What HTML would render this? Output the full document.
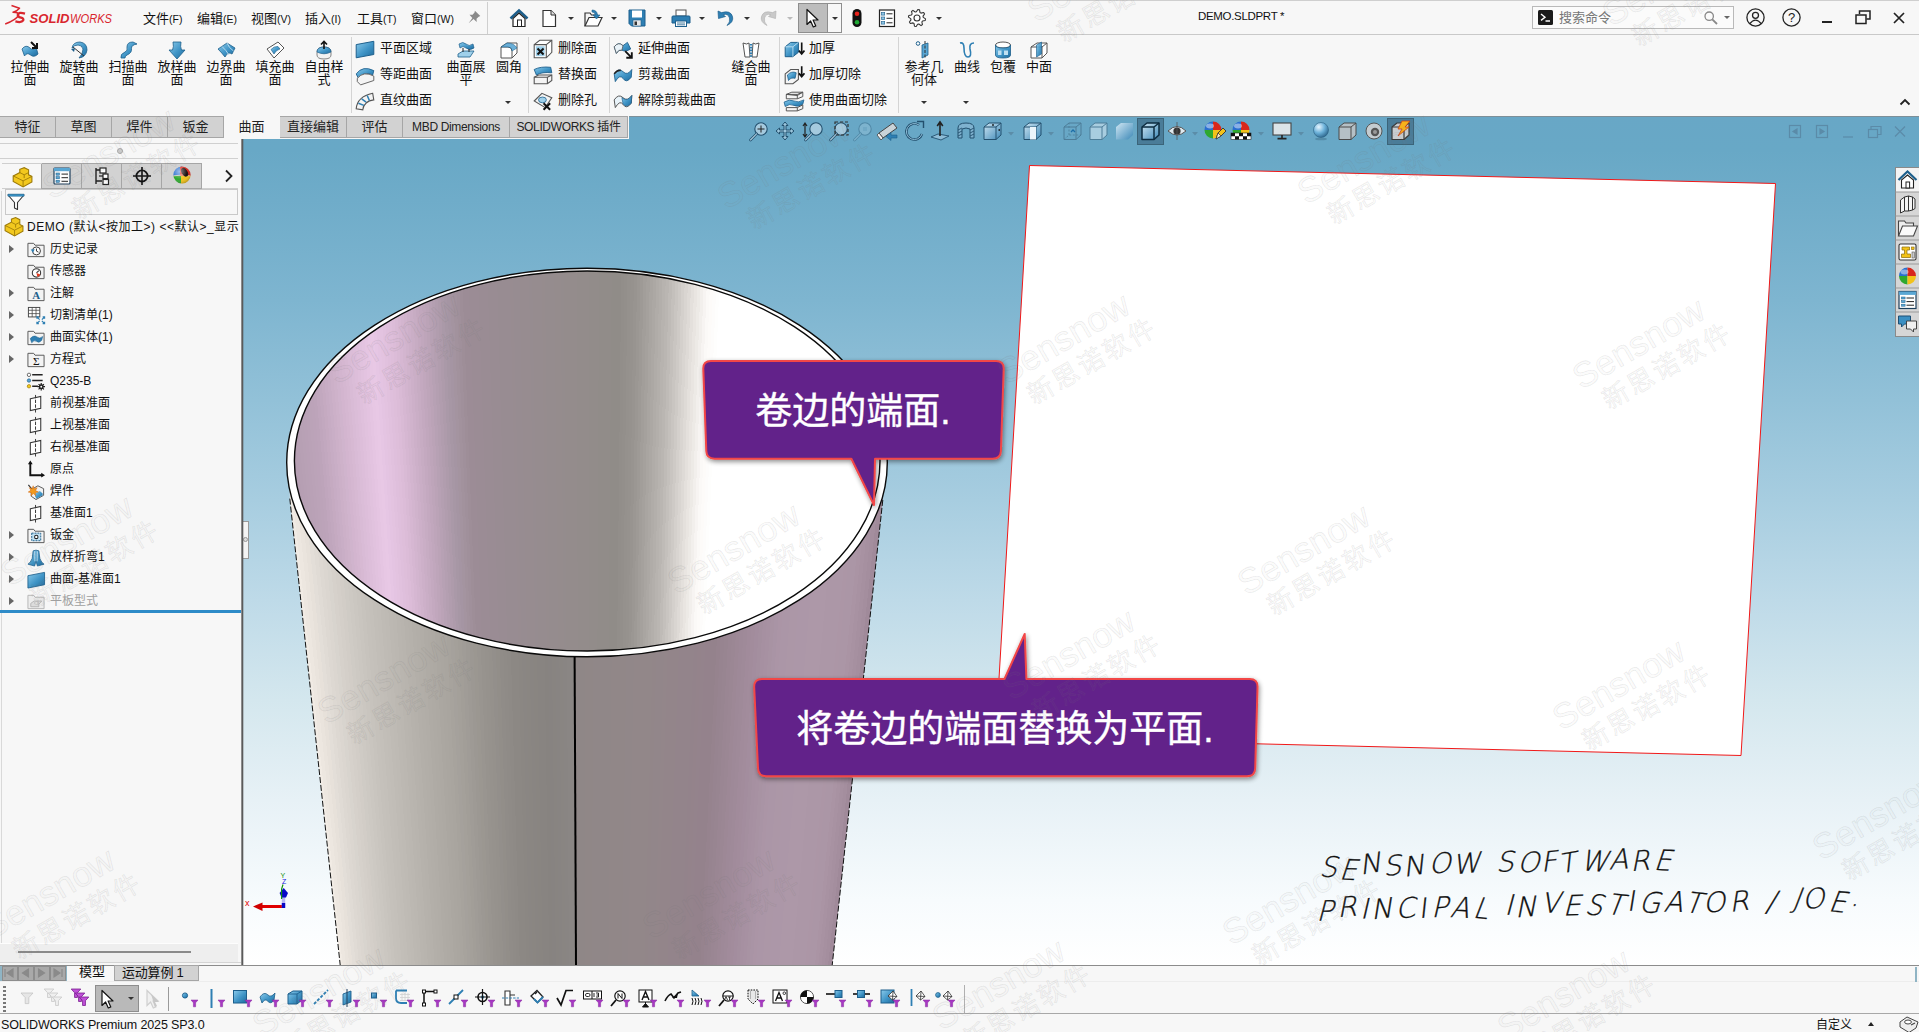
<!DOCTYPE html>
<html lang="zh-CN">
<head>
<meta charset="utf-8">
<title>DEMO.SLDPRT - SOLIDWORKS</title>
<style>
*{box-sizing:border-box}
html,body{margin:0;padding:0}
body{width:1919px;height:1032px;position:relative;overflow:hidden;background:#f7f7f7;
 font-family:"Liberation Sans","Noto Sans CJK SC",sans-serif;font-size:12px;color:#111}
.abs{position:absolute}
#titlebar{position:absolute;left:0;top:0;width:1919px;height:35px;background:#f7f7f7;border-bottom:1px solid #c9c9c9}
#ribbon{position:absolute;left:0;top:35px;width:1919px;height:81px;background:#f7f7f7}
#tabs{position:absolute;left:0;top:116px;height:23px;width:629px;background:#f7f7f7}
#viewport{position:absolute;left:0;top:0}
#leftpanel{position:absolute;left:0;top:139px;width:242px;height:826px;background:#f7f7f7;border-right:1px solid #8c8c8c}
#bottombar{position:absolute;left:0;top:965px;width:1919px;height:67px;background:#f7f7f7;border-top:1px solid #8c8c8c}
.menu{position:absolute;top:8px;font-size:13px;white-space:nowrap;color:#111}
.menu small{font-size:10.5px}
.tab{position:absolute;top:0;height:22px;background:#d2d2d2;border:1px solid #a6a6a6;border-left:none;font-size:13px;text-align:center;line-height:20px;color:#222;white-space:nowrap}
.tab.act{background:#f7f7f7;border-color:transparent}
.big{position:absolute;top:3px;width:50px;text-align:center;font-size:13px;line-height:13px;color:#111}
.big svg{display:block;margin:0 auto 3px auto}
.sm{position:absolute;font-size:13px;line-height:16px;white-space:nowrap;color:#111}
.sm svg{position:absolute;left:-27px;top:-2px}
.vsep{position:absolute;top:2px;width:1px;height:76px;background:#d4d4d4}
.dd{position:absolute;width:0;height:0;border-left:3px solid transparent;border-right:3px solid transparent;border-top:3px solid #333}
.row{position:absolute;left:0;height:22px;width:241px;font-size:12px;line-height:22px;white-space:nowrap;color:#111}
.row .tx{position:absolute;left:50px;top:0}
.row .ar{position:absolute;left:9px;top:7px;width:0;height:0;border-top:4px solid transparent;border-bottom:4px solid transparent;border-left:5px solid #666}
.row svg{position:absolute;left:26px;top:2px}
</style>
</head>
<body>
<svg id="gdefs" width="0" height="0" style="position:absolute"><defs><linearGradient id="rb" x1="0" y1="0" x2="1" y2="1"><stop offset="0" stop-color="#8ccbeb"/><stop offset=".55" stop-color="#3f94c6"/><stop offset="1" stop-color="#1f6a9c"/></linearGradient></defs></svg>
<svg id="viewport" width="1919" height="1032" viewBox="0 0 1919 1032">
<defs>
<linearGradient id="bg" x1="0" y1="116" x2="0" y2="965" gradientUnits="userSpaceOnUse">
<stop offset="0.0000" stop-color="#68a7c6"/><stop offset="0.0400" stop-color="#68a8c6"/><stop offset="0.0989" stop-color="#6facc9"/><stop offset="0.2167" stop-color="#7eb5d0"/><stop offset="0.3345" stop-color="#92c1d8"/><stop offset="0.4523" stop-color="#a7cde0"/><stop offset="0.5701" stop-color="#bedae8"/><stop offset="0.6879" stop-color="#d4e7ee"/><stop offset="0.8057" stop-color="#e7f1f6"/><stop offset="0.9234" stop-color="#f7fbfd"/><stop offset="1.0000" stop-color="#ffffff"/>
</linearGradient>
<linearGradient id="gin" x1="294" y1="0" x2="880" y2="0" gradientUnits="userSpaceOnUse">
<stop offset="0" stop-color="#b09cac"/>
<stop offset="0.061" stop-color="#c4a8c0"/>
<stop offset="0.147" stop-color="#e8c8e6"/>
<stop offset="0.215" stop-color="#d4b4d0"/>
<stop offset="0.275" stop-color="#b49cb0"/>
<stop offset="0.326" stop-color="#9c8c96"/>
<stop offset="0.462" stop-color="#968c8e"/>
<stop offset="0.565" stop-color="#908c88"/>
<stop offset="0.633" stop-color="#b8b4b0"/>
<stop offset="0.693" stop-color="#f4f0ec"/>
<stop offset="0.72" stop-color="#ffffff"/>
<stop offset="1" stop-color="#ffffff"/>
</linearGradient>
<linearGradient id="gout" x1="290" y1="0" x2="885" y2="0" gradientUnits="userSpaceOnUse">
<stop offset="0.017" stop-color="#f4f0ec"/>
<stop offset="0.05" stop-color="#e0dcd8"/>
<stop offset="0.10" stop-color="#ccc8c4"/>
<stop offset="0.218" stop-color="#b8b4b0"/>
<stop offset="0.336" stop-color="#a09c98"/>
<stop offset="0.454" stop-color="#888480"/>
<stop offset="0.479" stop-color="#888482"/>
<stop offset="0.479" stop-color="#8c8486"/>
<stop offset="0.588" stop-color="#908688"/>
<stop offset="0.689" stop-color="#948490"/>
<stop offset="0.79" stop-color="#a896a6"/>
<stop offset="0.874" stop-color="#b09cac"/>
<stop offset="0.941" stop-color="#a894a4"/>
<stop offset="1" stop-color="#a08c9c"/>
</linearGradient>
<clipPath id="bodyclip"><path d="M289.8 498.6 L340.3 966 L832.1 966 L882.8 500 L882.8 440 L289.8 440 Z"/></clipPath><clipPath id="inclip"><ellipse cx="587.2" cy="461" rx="292.8" ry="190"/></clipPath><clipPath id="vpclip"><rect x="242" y="116" width="1677" height="849"/></clipPath>
<filter id="sh" x="-10%" y="-20%" width="120%" height="150%"><feGaussianBlur in="SourceAlpha" stdDeviation="2.5"/><feOffset dx="1" dy="2"/><feComponentTransfer><feFuncA type="linear" slope="0.45"/></feComponentTransfer><feMerge><feMergeNode/><feMergeNode in="SourceGraphic"/></feMerge></filter>
</defs>
<rect x="242" y="116" width="1677" height="849" fill="url(#bg)"/>
<g clip-path="url(#vpclip)">
<!-- cylinder body -->
<g clip-path="url(#bodyclip)" shape-rendering="crispEdges"><path d="M282.7 440 L288.3 440 L344.4 966 L339.5 966 Z" fill="#f1ebe4"/><path d="M286.7 440 L292.3 440 L347.7 966 L342.8 966 Z" fill="#ede7e0"/><path d="M290.7 440 L296.4 440 L350.9 966 L346.1 966 Z" fill="#eae4dd"/><path d="M294.8 440 L300.4 440 L354.2 966 L349.3 966 Z" fill="#e7e1da"/><path d="M298.8 440 L304.5 440 L357.5 966 L352.6 966 Z" fill="#e3ded8"/><path d="M302.9 440 L308.5 440 L360.8 966 L355.9 966 Z" fill="#e0dbd5"/><path d="M306.9 440 L312.5 440 L364.1 966 L359.2 966 Z" fill="#ddd8d2"/><path d="M310.9 440 L316.6 440 L367.3 966 L362.5 966 Z" fill="#dbd6d0"/><path d="M315.0 440 L320.6 440 L370.6 966 L365.7 966 Z" fill="#d8d4ce"/><path d="M319.0 440 L324.7 440 L373.9 966 L369.0 966 Z" fill="#d6d1cb"/><path d="M323.1 440 L328.7 440 L377.2 966 L372.3 966 Z" fill="#d4cfc9"/><path d="M327.1 440 L332.7 440 L380.4 966 L375.6 966 Z" fill="#d2cdc7"/><path d="M331.1 440 L336.8 440 L383.7 966 L378.8 966 Z" fill="#cfcbc5"/><path d="M335.2 440 L340.8 440 L387.0 966 L382.1 966 Z" fill="#cdc9c3"/><path d="M339.2 440 L344.9 440 L390.3 966 L385.4 966 Z" fill="#cbc7c1"/><path d="M343.3 440 L348.9 440 L393.6 966 L388.7 966 Z" fill="#c9c5bf"/><path d="M347.3 440 L352.9 440 L396.8 966 L392.0 966 Z" fill="#c7c3bd"/><path d="M351.3 440 L357.0 440 L400.1 966 L395.2 966 Z" fill="#c5c1bb"/><path d="M355.4 440 L361.0 440 L403.4 966 L398.5 966 Z" fill="#c4c0ba"/><path d="M359.4 440 L365.0 440 L406.7 966 L401.8 966 Z" fill="#c2beb8"/><path d="M363.4 440 L369.1 440 L410.0 966 L405.1 966 Z" fill="#c1bdb7"/><path d="M367.5 440 L373.1 440 L413.2 966 L408.4 966 Z" fill="#bfbbb5"/><path d="M371.5 440 L377.2 440 L416.5 966 L411.6 966 Z" fill="#bebab4"/><path d="M375.6 440 L381.2 440 L419.8 966 L414.9 966 Z" fill="#bcb8b2"/><path d="M379.6 440 L385.2 440 L423.1 966 L418.2 966 Z" fill="#bbb7b1"/><path d="M383.6 440 L389.3 440 L426.3 966 L421.5 966 Z" fill="#b9b5af"/><path d="M387.7 440 L393.3 440 L429.6 966 L424.7 966 Z" fill="#b8b4ae"/><path d="M391.7 440 L397.4 440 L432.9 966 L428.0 966 Z" fill="#b6b2ac"/><path d="M395.8 440 L401.4 440 L436.2 966 L431.3 966 Z" fill="#b5b1ab"/><path d="M399.8 440 L405.4 440 L439.5 966 L434.6 966 Z" fill="#b3afa9"/><path d="M403.8 440 L409.5 440 L442.7 966 L437.9 966 Z" fill="#b2aea8"/><path d="M407.9 440 L413.5 440 L446.0 966 L441.1 966 Z" fill="#b1ada7"/><path d="M411.9 440 L417.6 440 L449.3 966 L444.4 966 Z" fill="#afaba5"/><path d="M416.0 440 L421.6 440 L452.6 966 L447.7 966 Z" fill="#aeaaa4"/><path d="M420.0 440 L425.6 440 L455.9 966 L451.0 966 Z" fill="#ada9a3"/><path d="M424.0 440 L429.7 440 L459.1 966 L454.3 966 Z" fill="#aba7a1"/><path d="M428.1 440 L433.7 440 L462.4 966 L457.5 966 Z" fill="#aaa6a0"/><path d="M432.1 440 L437.8 440 L465.7 966 L460.8 966 Z" fill="#a9a59f"/><path d="M436.2 440 L441.8 440 L469.0 966 L464.1 966 Z" fill="#a7a39d"/><path d="M440.2 440 L445.8 440 L472.2 966 L467.4 966 Z" fill="#a5a19c"/><path d="M444.2 440 L449.9 440 L475.5 966 L470.6 966 Z" fill="#a4a09a"/><path d="M448.3 440 L453.9 440 L478.8 966 L473.9 966 Z" fill="#a29e98"/><path d="M452.3 440 L457.9 440 L482.1 966 L477.2 966 Z" fill="#a09c97"/><path d="M456.3 440 L462.0 440 L485.4 966 L480.5 966 Z" fill="#9e9a95"/><path d="M460.4 440 L466.0 440 L488.6 966 L483.8 966 Z" fill="#9c9893"/><path d="M464.4 440 L470.1 440 L491.9 966 L487.0 966 Z" fill="#9b9791"/><path d="M468.5 440 L474.1 440 L495.2 966 L490.3 966 Z" fill="#999590"/><path d="M472.5 440 L478.1 440 L498.5 966 L493.6 966 Z" fill="#97938e"/><path d="M476.5 440 L482.2 440 L501.8 966 L496.9 966 Z" fill="#96928d"/><path d="M480.6 440 L486.2 440 L505.0 966 L500.2 966 Z" fill="#95918c"/><path d="M484.6 440 L490.3 440 L508.3 966 L503.4 966 Z" fill="#938f8b"/><path d="M488.7 440 L494.3 440 L511.6 966 L506.7 966 Z" fill="#928e89"/><path d="M492.7 440 L498.3 440 L514.9 966 L510.0 966 Z" fill="#908c88"/><path d="M496.7 440 L502.4 440 L518.1 966 L513.3 966 Z" fill="#8f8b87"/><path d="M500.8 440 L506.4 440 L521.4 966 L516.5 966 Z" fill="#8e8a86"/><path d="M504.8 440 L510.5 440 L524.7 966 L519.8 966 Z" fill="#8c8884"/><path d="M508.9 440 L514.5 440 L528.0 966 L523.1 966 Z" fill="#8c8884"/><path d="M512.9 440 L518.5 440 L531.3 966 L526.4 966 Z" fill="#8b8783"/><path d="M516.9 440 L522.6 440 L534.5 966 L529.7 966 Z" fill="#8a8683"/><path d="M521.0 440 L526.6 440 L537.8 966 L532.9 966 Z" fill="#8a8682"/><path d="M525.0 440 L530.7 440 L541.1 966 L536.2 966 Z" fill="#898582"/><path d="M529.1 440 L534.7 440 L544.4 966 L539.5 966 Z" fill="#898581"/><path d="M533.1 440 L538.7 440 L547.7 966 L542.8 966 Z" fill="#888481"/><path d="M537.1 440 L542.8 440 L550.9 966 L546.1 966 Z" fill="#888481"/><path d="M541.2 440 L546.8 440 L554.2 966 L549.3 966 Z" fill="#878380"/><path d="M545.2 440 L550.8 440 L557.5 966 L552.6 966 Z" fill="#878381"/><path d="M549.2 440 L554.9 440 L560.8 966 L555.9 966 Z" fill="#888481"/><path d="M553.3 440 L558.9 440 L564.0 966 L559.2 966 Z" fill="#888482"/><path d="M557.3 440 L563.0 440 L567.3 966 L562.4 966 Z" fill="#898582"/><path d="M561.4 440 L567.0 440 L570.6 966 L565.7 966 Z" fill="#898583"/><path d="M565.4 440 L571.0 440 L573.9 966 L569.0 966 Z" fill="#8a8684"/><path d="M569.4 440 L575.1 440 L577.2 966 L572.3 966 Z" fill="#8a8684"/><path d="M573.5 440 L579.1 440 L580.4 966 L575.6 966 Z" fill="#8f8787"/><path d="M577.5 440 L583.2 440 L583.7 966 L578.8 966 Z" fill="#8f8787"/><path d="M581.6 440 L587.2 440 L587.0 966 L582.1 966 Z" fill="#8f8787"/><path d="M585.6 440 L591.2 440 L590.3 966 L585.4 966 Z" fill="#908787"/><path d="M589.6 440 L595.3 440 L593.6 966 L588.7 966 Z" fill="#908787"/><path d="M593.7 440 L599.3 440 L596.8 966 L592.0 966 Z" fill="#908788"/><path d="M597.7 440 L603.4 440 L600.1 966 L595.2 966 Z" fill="#908788"/><path d="M601.8 440 L607.4 440 L603.4 966 L598.5 966 Z" fill="#908788"/><path d="M605.8 440 L611.4 440 L606.7 966 L601.8 966 Z" fill="#908788"/><path d="M609.8 440 L615.5 440 L610.0 966 L605.1 966 Z" fill="#908788"/><path d="M613.9 440 L619.5 440 L613.2 966 L608.4 966 Z" fill="#918788"/><path d="M617.9 440 L623.5 440 L616.5 966 L611.6 966 Z" fill="#918788"/><path d="M621.9 440 L627.6 440 L619.8 966 L614.9 966 Z" fill="#918788"/><path d="M626.0 440 L631.6 440 L623.1 966 L618.2 966 Z" fill="#918788"/><path d="M630.0 440 L635.7 440 L626.3 966 L621.5 966 Z" fill="#918789"/><path d="M634.1 440 L639.7 440 L629.6 966 L624.7 966 Z" fill="#918789"/><path d="M638.1 440 L643.7 440 L632.9 966 L628.0 966 Z" fill="#928789"/><path d="M642.1 440 L647.8 440 L636.2 966 L631.3 966 Z" fill="#928789"/><path d="M646.2 440 L651.8 440 L639.5 966 L634.6 966 Z" fill="#928789"/><path d="M650.2 440 L655.9 440 L642.7 966 L637.9 966 Z" fill="#928789"/><path d="M654.3 440 L659.9 440 L646.0 966 L641.1 966 Z" fill="#928789"/><path d="M658.3 440 L663.9 440 L649.3 966 L644.4 966 Z" fill="#928689"/><path d="M662.3 440 L668.0 440 L652.6 966 L647.7 966 Z" fill="#92868a"/><path d="M666.4 440 L672.0 440 L655.9 966 L651.0 966 Z" fill="#92868a"/><path d="M670.4 440 L676.1 440 L659.1 966 L654.3 966 Z" fill="#93868a"/><path d="M674.5 440 L680.1 440 L662.4 966 L657.5 966 Z" fill="#93858a"/><path d="M678.5 440 L684.1 440 L665.7 966 L660.8 966 Z" fill="#93858a"/><path d="M682.5 440 L688.2 440 L669.0 966 L664.1 966 Z" fill="#93858a"/><path d="M686.6 440 L692.2 440 L672.2 966 L667.4 966 Z" fill="#93848b"/><path d="M690.6 440 L696.3 440 L675.5 966 L670.6 966 Z" fill="#93848b"/><path d="M694.7 440 L700.3 440 L678.8 966 L673.9 966 Z" fill="#93848b"/><path d="M698.7 440 L704.3 440 L682.1 966 L677.2 966 Z" fill="#93848b"/><path d="M702.7 440 L708.4 440 L685.4 966 L680.5 966 Z" fill="#93838b"/><path d="M706.8 440 L712.4 440 L688.6 966 L683.8 966 Z" fill="#94838b"/><path d="M710.8 440 L716.4 440 L691.9 966 L687.0 966 Z" fill="#94838c"/><path d="M714.8 440 L720.5 440 L695.2 966 L690.3 966 Z" fill="#94828c"/><path d="M718.9 440 L724.5 440 L698.5 966 L693.6 966 Z" fill="#94828c"/><path d="M722.9 440 L728.6 440 L701.8 966 L696.9 966 Z" fill="#94828c"/><path d="M727.0 440 L732.6 440 L705.0 966 L700.2 966 Z" fill="#96838e"/><path d="M731.0 440 L736.6 440 L708.3 966 L703.4 966 Z" fill="#978490"/><path d="M735.0 440 L740.7 440 L711.6 966 L706.7 966 Z" fill="#988591"/><path d="M739.1 440 L744.7 440 L714.9 966 L710.0 966 Z" fill="#9a8693"/><path d="M743.1 440 L748.8 440 L718.1 966 L713.3 966 Z" fill="#9b8794"/><path d="M747.2 440 L752.8 440 L721.4 966 L716.5 966 Z" fill="#9d8896"/><path d="M751.2 440 L756.8 440 L724.7 966 L719.8 966 Z" fill="#9e8998"/><path d="M755.2 440 L760.9 440 L728.0 966 L723.1 966 Z" fill="#9f8a99"/><path d="M759.3 440 L764.9 440 L731.3 966 L726.4 966 Z" fill="#a18b9b"/><path d="M763.3 440 L769.0 440 L734.5 966 L729.7 966 Z" fill="#a28c9c"/><path d="M767.4 440 L773.0 440 L737.8 966 L732.9 966 Z" fill="#a38d9e"/><path d="M771.4 440 L777.0 440 L741.1 966 L736.2 966 Z" fill="#a48f9f"/><path d="M775.4 440 L781.1 440 L744.4 966 L739.5 966 Z" fill="#a690a1"/><path d="M779.5 440 L785.1 440 L747.7 966 L742.8 966 Z" fill="#a791a2"/><path d="M783.5 440 L789.2 440 L750.9 966 L746.1 966 Z" fill="#a893a3"/><path d="M787.6 440 L793.2 440 L754.2 966 L749.3 966 Z" fill="#a994a5"/><path d="M791.6 440 L797.2 440 L757.5 966 L752.6 966 Z" fill="#ab95a6"/><path d="M795.6 440 L801.3 440 L760.8 966 L755.9 966 Z" fill="#ab96a7"/><path d="M799.7 440 L805.3 440 L764.0 966 L759.2 966 Z" fill="#ab96a7"/><path d="M803.7 440 L809.3 440 L767.3 966 L762.4 966 Z" fill="#ac97a7"/><path d="M807.7 440 L813.4 440 L770.6 966 L765.7 966 Z" fill="#ac97a7"/><path d="M811.8 440 L817.4 440 L773.9 966 L769.0 966 Z" fill="#ac97a8"/><path d="M815.8 440 L821.5 440 L777.2 966 L772.3 966 Z" fill="#ac97a8"/><path d="M819.9 440 L825.5 440 L780.4 966 L775.6 966 Z" fill="#ac97a8"/><path d="M823.9 440 L829.5 440 L783.7 966 L778.8 966 Z" fill="#ad98a8"/><path d="M827.9 440 L833.6 440 L787.0 966 L782.1 966 Z" fill="#ad98a8"/><path d="M832.0 440 L837.6 440 L790.3 966 L785.4 966 Z" fill="#ad98a8"/><path d="M836.0 440 L841.7 440 L793.6 966 L788.7 966 Z" fill="#ad98a8"/><path d="M840.1 440 L845.7 440 L796.8 966 L792.0 966 Z" fill="#ac97a7"/><path d="M844.1 440 L849.7 440 L800.1 966 L795.2 966 Z" fill="#ac97a7"/><path d="M848.1 440 L853.8 440 L803.4 966 L798.5 966 Z" fill="#ac97a7"/><path d="M852.2 440 L857.8 440 L806.7 966 L801.8 966 Z" fill="#ac97a7"/><path d="M856.2 440 L861.9 440 L809.9 966 L805.1 966 Z" fill="#ac96a6"/><path d="M860.3 440 L865.9 440 L813.2 966 L808.3 966 Z" fill="#ab96a6"/><path d="M864.3 440 L869.9 440 L816.5 966 L811.6 966 Z" fill="#ab96a6"/><path d="M868.3 440 L874.0 440 L819.8 966 L814.9 966 Z" fill="#aa94a4"/><path d="M872.4 440 L878.0 440 L823.1 966 L818.2 966 Z" fill="#a892a2"/><path d="M876.4 440 L882.0 440 L826.3 966 L821.5 966 Z" fill="#a690a0"/><path d="M880.4 440 L886.1 440 L829.6 966 L824.7 966 Z" fill="#a48e9e"/><path d="M884.5 440 L890.1 440 L832.9 966 L828.0 966 Z" fill="#a08a9a"/></g>
<path d="M289.8 498.6 L340.3 966" stroke="#111" stroke-width="1" stroke-dasharray="6 2" fill="none"/>
<path d="M882.8 500 L832.1 966" stroke="#111" stroke-width="1" stroke-dasharray="6 2" fill="none"/>
<path d="M574.6 655 L576 966" stroke="#000" stroke-width="2" fill="none"/>
<!-- rim -->
<ellipse cx="587" cy="462.5" rx="300.3" ry="194.3" fill="#ffffff" stroke="#0a0a0a" stroke-width="1.4"/>
<g clip-path="url(#inclip)"><rect x="280" y="260" width="620" height="400" fill="#fff"/><g shape-rendering="crispEdges"><path d="M244.2 262 L249.0 262 L290.6 658 L286.2 658 Z" fill="#b49eb2"/><path d="M247.4 262 L252.2 262 L293.4 658 L289.0 658 Z" fill="#b49eb2"/><path d="M250.6 262 L255.4 262 L296.2 658 L291.8 658 Z" fill="#b49eb2"/><path d="M253.8 262 L258.6 262 L299.0 658 L294.6 658 Z" fill="#b49eb2"/><path d="M257.0 262 L261.8 262 L301.8 658 L297.4 658 Z" fill="#b49eb2"/><path d="M260.2 262 L265.0 262 L304.6 658 L300.2 658 Z" fill="#b49eb2"/><path d="M263.4 262 L268.2 262 L307.4 658 L303.0 658 Z" fill="#b49eb2"/><path d="M266.6 262 L271.4 262 L310.2 658 L305.8 658 Z" fill="#b49eb2"/><path d="M269.8 262 L274.6 262 L313.0 658 L308.6 658 Z" fill="#b49eb2"/><path d="M273.0 262 L277.8 262 L315.8 658 L311.4 658 Z" fill="#b49eb2"/><path d="M276.2 262 L281.0 262 L318.6 658 L314.2 658 Z" fill="#b59eb2"/><path d="M279.4 262 L284.2 262 L321.4 658 L317.0 658 Z" fill="#b69fb3"/><path d="M282.6 262 L287.4 262 L324.2 658 L319.8 658 Z" fill="#b7a0b4"/><path d="M285.8 262 L290.6 262 L327.0 658 L322.6 658 Z" fill="#b8a1b5"/><path d="M289.0 262 L293.8 262 L329.8 658 L325.4 658 Z" fill="#b9a1b6"/><path d="M292.2 262 L297.0 262 L332.6 658 L328.2 658 Z" fill="#baa2b7"/><path d="M295.4 262 L300.2 262 L335.4 658 L331.0 658 Z" fill="#bba3b8"/><path d="M298.6 262 L303.4 262 L338.2 658 L333.8 658 Z" fill="#bca3b9"/><path d="M301.8 262 L306.6 262 L341.0 658 L336.6 658 Z" fill="#bda4ba"/><path d="M305.0 262 L309.7 262 L343.9 658 L339.4 658 Z" fill="#c0a6bd"/><path d="M308.1 262 L312.9 262 L346.7 658 L342.3 658 Z" fill="#c2a8bf"/><path d="M311.3 262 L316.1 262 L349.5 658 L345.1 658 Z" fill="#c5aac1"/><path d="M314.5 262 L319.3 262 L352.3 658 L347.9 658 Z" fill="#c7acc4"/><path d="M317.7 262 L322.5 262 L355.1 658 L350.7 658 Z" fill="#c9aec6"/><path d="M320.9 262 L325.7 262 L357.9 658 L353.5 658 Z" fill="#ccb0c8"/><path d="M324.1 262 L328.9 262 L360.7 658 L356.3 658 Z" fill="#ceb2ca"/><path d="M327.3 262 L332.1 262 L363.5 658 L359.1 658 Z" fill="#d0b4cd"/><path d="M330.5 262 L335.3 262 L366.3 658 L361.9 658 Z" fill="#d3b5cf"/><path d="M333.7 262 L338.5 262 L369.1 658 L364.7 658 Z" fill="#d5b7d1"/><path d="M336.9 262 L341.7 262 L371.9 658 L367.5 658 Z" fill="#d7b9d3"/><path d="M340.1 262 L344.9 262 L374.7 658 L370.3 658 Z" fill="#d9bbd6"/><path d="M343.3 262 L348.1 262 L377.5 658 L373.1 658 Z" fill="#dbbdd8"/><path d="M346.5 262 L351.3 262 L380.3 658 L375.9 658 Z" fill="#ddbeda"/><path d="M349.7 262 L354.5 262 L383.1 658 L378.7 658 Z" fill="#dfc0dc"/><path d="M352.9 262 L357.7 262 L385.9 658 L381.5 658 Z" fill="#e1c2de"/><path d="M356.1 262 L360.9 262 L388.7 658 L384.3 658 Z" fill="#e3c3e0"/><path d="M359.3 262 L364.1 262 L391.5 658 L387.1 658 Z" fill="#e5c5e2"/><path d="M362.5 262 L367.3 262 L394.3 658 L389.9 658 Z" fill="#e7c7e4"/><path d="M365.7 262 L370.5 262 L397.1 658 L392.7 658 Z" fill="#e8c8e5"/><path d="M368.9 262 L373.7 262 L399.9 658 L395.5 658 Z" fill="#e6c6e4"/><path d="M372.1 262 L376.9 262 L402.7 658 L398.3 658 Z" fill="#e4c4e2"/><path d="M375.3 262 L380.1 262 L405.5 658 L401.1 658 Z" fill="#e3c3e0"/><path d="M378.5 262 L383.3 262 L408.3 658 L403.9 658 Z" fill="#e1c1de"/><path d="M381.7 262 L386.5 262 L411.1 658 L406.7 658 Z" fill="#dfbfdc"/><path d="M384.9 262 L389.6 262 L414.0 658 L409.5 658 Z" fill="#debeda"/><path d="M388.0 262 L392.8 262 L416.8 658 L412.4 658 Z" fill="#dcbcd8"/><path d="M391.2 262 L396.0 262 L419.6 658 L415.2 658 Z" fill="#d9bad5"/><path d="M394.4 262 L399.2 262 L422.4 658 L418.0 658 Z" fill="#d6b7d2"/><path d="M397.6 262 L402.4 262 L425.2 658 L420.8 658 Z" fill="#d3b5cf"/><path d="M400.8 262 L405.6 262 L428.0 658 L423.6 658 Z" fill="#d0b3cc"/><path d="M404.0 262 L408.8 262 L430.8 658 L426.4 658 Z" fill="#cdb0c9"/><path d="M407.2 262 L412.0 262 L433.6 658 L429.2 658 Z" fill="#caaec6"/><path d="M410.4 262 L415.2 262 L436.4 658 L432.0 658 Z" fill="#c7acc3"/><path d="M413.6 262 L418.4 262 L439.2 658 L434.8 658 Z" fill="#c4a9c0"/><path d="M416.8 262 L421.6 262 L442.0 658 L437.6 658 Z" fill="#c1a7bd"/><path d="M420.0 262 L424.8 262 L444.8 658 L440.4 658 Z" fill="#bea5ba"/><path d="M423.2 262 L428.0 262 L447.6 658 L443.2 658 Z" fill="#bba3b7"/><path d="M426.4 262 L431.2 262 L450.4 658 L446.0 658 Z" fill="#b7a1b4"/><path d="M429.6 262 L434.4 262 L453.2 658 L448.8 658 Z" fill="#b49fb1"/><path d="M432.8 262 L437.6 262 L456.0 658 L451.6 658 Z" fill="#b19dae"/><path d="M436.0 262 L440.8 262 L458.8 658 L454.4 658 Z" fill="#ae9bab"/><path d="M439.2 262 L444.0 262 L461.6 658 L457.2 658 Z" fill="#aa99a8"/><path d="M442.4 262 L447.2 262 L464.4 658 L460.0 658 Z" fill="#a797a5"/><path d="M445.6 262 L450.4 262 L467.2 658 L462.8 658 Z" fill="#a595a3"/><path d="M448.8 262 L453.6 262 L470.0 658 L465.6 658 Z" fill="#a494a0"/><path d="M452.0 262 L456.8 262 L472.8 658 L468.4 658 Z" fill="#a2929d"/><path d="M455.2 262 L460.0 262 L475.6 658 L471.2 658 Z" fill="#a0909b"/><path d="M458.4 262 L463.2 262 L478.4 658 L474.0 658 Z" fill="#9e8e98"/><path d="M461.6 262 L466.4 262 L481.2 658 L476.8 658 Z" fill="#9c8c96"/><path d="M464.8 262 L469.5 262 L484.1 658 L479.6 658 Z" fill="#9c8c96"/><path d="M467.9 262 L472.7 262 L486.9 658 L482.5 658 Z" fill="#9b8c95"/><path d="M471.1 262 L475.9 262 L489.7 658 L485.3 658 Z" fill="#9b8c95"/><path d="M474.3 262 L479.1 262 L492.5 658 L488.1 658 Z" fill="#9b8c95"/><path d="M477.5 262 L482.3 262 L495.3 658 L490.9 658 Z" fill="#9a8c94"/><path d="M480.7 262 L485.5 262 L498.1 658 L493.7 658 Z" fill="#9a8c94"/><path d="M483.9 262 L488.7 262 L500.9 658 L496.5 658 Z" fill="#9a8c94"/><path d="M487.1 262 L491.9 262 L503.7 658 L499.3 658 Z" fill="#998c93"/><path d="M490.3 262 L495.1 262 L506.5 658 L502.1 658 Z" fill="#998c93"/><path d="M493.5 262 L498.3 262 L509.3 658 L504.9 658 Z" fill="#998c93"/><path d="M496.7 262 L501.5 262 L512.1 658 L507.7 658 Z" fill="#988c92"/><path d="M499.9 262 L504.7 262 L514.9 658 L510.5 658 Z" fill="#988c92"/><path d="M503.1 262 L507.9 262 L517.7 658 L513.3 658 Z" fill="#988c92"/><path d="M506.3 262 L511.1 262 L520.5 658 L516.1 658 Z" fill="#988c92"/><path d="M509.5 262 L514.3 262 L523.3 658 L518.9 658 Z" fill="#988c91"/><path d="M512.7 262 L517.5 262 L526.1 658 L521.7 658 Z" fill="#978c91"/><path d="M515.9 262 L520.7 262 L528.9 658 L524.5 658 Z" fill="#978c91"/><path d="M519.1 262 L523.9 262 L531.7 658 L527.3 658 Z" fill="#978c90"/><path d="M522.3 262 L527.1 262 L534.5 658 L530.1 658 Z" fill="#978c90"/><path d="M525.5 262 L530.3 262 L537.3 658 L532.9 658 Z" fill="#978c90"/><path d="M528.7 262 L533.5 262 L540.1 658 L535.7 658 Z" fill="#968c90"/><path d="M531.9 262 L536.7 262 L542.9 658 L538.5 658 Z" fill="#968c8f"/><path d="M535.1 262 L539.9 262 L545.7 658 L541.3 658 Z" fill="#968c8f"/><path d="M538.3 262 L543.1 262 L548.5 658 L544.1 658 Z" fill="#968c8f"/><path d="M541.5 262 L546.3 262 L551.3 658 L546.9 658 Z" fill="#968c8e"/><path d="M544.7 262 L549.4 262 L554.2 658 L549.7 658 Z" fill="#958c8e"/><path d="M547.8 262 L552.6 262 L557.0 658 L552.6 658 Z" fill="#958c8e"/><path d="M551.0 262 L555.8 262 L559.8 658 L555.4 658 Z" fill="#958c8e"/><path d="M554.2 262 L559.0 262 L562.6 658 L558.2 658 Z" fill="#958c8d"/><path d="M557.4 262 L562.2 262 L565.4 658 L561.0 658 Z" fill="#958c8d"/><path d="M560.6 262 L565.4 262 L568.2 658 L563.8 658 Z" fill="#948c8d"/><path d="M563.8 262 L568.6 262 L571.0 658 L566.6 658 Z" fill="#948c8c"/><path d="M567.0 262 L571.8 262 L573.8 658 L569.4 658 Z" fill="#948c8c"/><path d="M570.2 262 L575.0 262 L576.6 658 L572.2 658 Z" fill="#948c8c"/><path d="M573.4 262 L578.2 262 L579.4 658 L575.0 658 Z" fill="#948c8c"/><path d="M576.6 262 L581.4 262 L582.2 658 L577.8 658 Z" fill="#938c8b"/><path d="M579.8 262 L584.6 262 L585.0 658 L580.6 658 Z" fill="#938c8b"/><path d="M583.0 262 L587.8 262 L587.8 658 L583.4 658 Z" fill="#938c8b"/><path d="M586.2 262 L591.0 262 L590.6 658 L586.2 658 Z" fill="#938c8b"/><path d="M589.4 262 L594.2 262 L593.4 658 L589.0 658 Z" fill="#928c8a"/><path d="M592.6 262 L597.4 262 L596.2 658 L591.8 658 Z" fill="#928c8a"/><path d="M595.8 262 L600.6 262 L599.0 658 L594.6 658 Z" fill="#928c8a"/><path d="M599.0 262 L603.8 262 L601.8 658 L597.4 658 Z" fill="#918c89"/><path d="M602.2 262 L607.0 262 L604.6 658 L600.2 658 Z" fill="#918c89"/><path d="M605.4 262 L610.2 262 L607.4 658 L603.0 658 Z" fill="#918c89"/><path d="M608.6 262 L613.4 262 L610.2 658 L605.8 658 Z" fill="#918c89"/><path d="M611.8 262 L616.6 262 L613.0 658 L608.6 658 Z" fill="#908c88"/><path d="M615.0 262 L619.8 262 L615.8 658 L611.4 658 Z" fill="#908c88"/><path d="M618.2 262 L623.0 262 L618.6 658 L614.2 658 Z" fill="#908c88"/><path d="M621.4 262 L626.2 262 L621.4 658 L617.0 658 Z" fill="#928e8a"/><path d="M624.6 262 L629.3 262 L624.3 658 L619.8 658 Z" fill="#938f8b"/><path d="M627.7 262 L632.5 262 L627.1 658 L622.7 658 Z" fill="#95918d"/><path d="M630.9 262 L635.7 262 L629.9 658 L625.5 658 Z" fill="#96928e"/><path d="M634.1 262 L638.9 262 L632.7 658 L628.3 658 Z" fill="#989490"/><path d="M637.3 262 L642.1 262 L635.5 658 L631.1 658 Z" fill="#9b9793"/><path d="M640.5 262 L645.3 262 L638.3 658 L633.9 658 Z" fill="#9e9a96"/><path d="M643.7 262 L648.5 262 L641.1 658 L636.7 658 Z" fill="#a29e9a"/><path d="M646.9 262 L651.7 262 L643.9 658 L639.5 658 Z" fill="#a5a19d"/><path d="M650.1 262 L654.9 262 L646.7 658 L642.3 658 Z" fill="#a9a5a1"/><path d="M653.3 262 L658.1 262 L649.5 658 L645.1 658 Z" fill="#aca8a4"/><path d="M656.5 262 L661.3 262 L652.3 658 L647.9 658 Z" fill="#b0aca8"/><path d="M659.7 262 L664.5 262 L655.1 658 L650.7 658 Z" fill="#b3afab"/><path d="M662.9 262 L667.7 262 L657.9 658 L653.5 658 Z" fill="#b7b3af"/><path d="M666.1 262 L670.9 262 L660.7 658 L656.3 658 Z" fill="#bab6b2"/><path d="M669.3 262 L674.1 262 L663.5 658 L659.1 658 Z" fill="#bfbbb7"/><path d="M672.5 262 L677.3 262 L666.3 658 L661.9 658 Z" fill="#c4c0bc"/><path d="M675.7 262 L680.5 262 L669.1 658 L664.7 658 Z" fill="#c9c5c1"/><path d="M678.9 262 L683.7 262 L671.9 658 L667.5 658 Z" fill="#cecac6"/><path d="M682.1 262 L686.9 262 L674.7 658 L670.3 658 Z" fill="#d4d0cc"/><path d="M685.3 262 L690.1 262 L677.5 658 L673.1 658 Z" fill="#d9d5d1"/><path d="M688.5 262 L693.3 262 L680.3 658 L675.9 658 Z" fill="#dedad6"/><path d="M691.7 262 L696.5 262 L683.1 658 L678.7 658 Z" fill="#e4e0dc"/><path d="M694.9 262 L699.7 262 L685.9 658 L681.5 658 Z" fill="#e9e5e1"/><path d="M698.1 262 L702.9 262 L688.7 658 L684.3 658 Z" fill="#edeae6"/><path d="M701.3 262 L706.1 262 L691.5 658 L687.1 658 Z" fill="#f2efec"/><path d="M704.5 262 L709.2 262 L694.4 658 L689.9 658 Z" fill="#f7f4f2"/><path d="M707.6 262 L712.4 262 L697.2 658 L692.8 658 Z" fill="#fbf9f7"/><path d="M710.8 262 L715.6 262 L700.0 658 L695.6 658 Z" fill="#fdfbf9"/><path d="M714.0 262 L718.8 262 L702.8 658 L698.4 658 Z" fill="#fdfcfb"/><path d="M717.2 262 L722.0 262 L705.6 658 L701.2 658 Z" fill="#fefefd"/><path d="M720.4 262 L725.2 262 L708.4 658 L704.0 658 Z" fill="#ffffff"/></g></g><ellipse cx="587.2" cy="461" rx="292.8" ry="190" fill="none" stroke="#0a0a0a" stroke-width="1.4"/>
<!-- plane -->
<path d="M1029.5 165.5 L1775.5 183.5 L1741 755.5 L995.5 737.5 Z" fill="#ffffff" stroke="#f01818" stroke-width="1"/>
</g>
<!-- callouts -->
<g filter="url(#sh)">
<path d="M711 361 L996 361 Q1004 361 1003.7 369 L1000.9 451 Q1000.6 458.7 992.6 458.7 L875 458.7 L874 505 L851.4 458.7 L714.6 458.7 Q706.6 458.7 706.3 451 L703.3 369 Q703 361 711 361 Z" fill="#62218a" stroke="#f24646" stroke-width="2" stroke-linejoin="round"/>
<path d="M762 679 L1004.5 679 L1024.7 634 L1026.4 679 L1249.7 679 Q1257.7 679 1257.5 687 L1255.2 768.2 Q1255 776.2 1247 776.2 L766.3 776.2 Q758.3 776.2 758 768.2 L754.2 687 Q754 679 762 679 Z" fill="#62218a" stroke="#f24646" stroke-width="2" stroke-linejoin="round"/>
</g>
<text x="853" y="423.5" font-family="'Liberation Sans','Noto Sans CJK SC',sans-serif" font-size="37" fill="#fff" stroke="#fff" stroke-width=".4" text-anchor="middle">卷边的端面.</text>
<text x="1005" y="741.5" font-family="'Liberation Sans','Noto Sans CJK SC',sans-serif" font-size="37" fill="#fff" stroke="#fff" stroke-width=".4" text-anchor="middle">将卷边的端面替换为平面.</text>
</svg>

<div id="titlebar">
<div class="abs" style="left:0;top:0;width:1919px;height:1px;background:#cfcfcf"></div>
<svg class="abs" style="left:4px;top:4px" width="112" height="24" viewBox="0 0 112 24"><path d="M7.5 1.5 L15.5 4.2 Q12.5 7.6 9 8.2 Q15.5 8.2 14.6 11.4 Q12 16 1.2 20" fill="none" stroke="#d9262e" stroke-width="1.5" stroke-linejoin="round"/><path d="M21 9.6 Q14.4 7.6 13.8 10.8 Q13.6 12.8 17 13.6 Q20 14.4 19.2 16.4 Q17.6 19 11.4 17.4" fill="none" stroke="#d9262e" stroke-width="2.3"/><text x="25.5" y="19" font-family="'Liberation Sans',sans-serif" font-size="12.6" font-style="italic" font-weight="bold" fill="#d9262e" textLength="40" lengthAdjust="spacingAndGlyphs">SOLID</text><text x="66" y="19" font-family="'Liberation Sans',sans-serif" font-size="12.6" font-style="italic" fill="#d9262e" textLength="42" lengthAdjust="spacingAndGlyphs">WORKS</text></svg>
<span class="menu" style="left:143px">文件<small>(F)</small></span>
<span class="menu" style="left:197px">编辑<small>(E)</small></span>
<span class="menu" style="left:251px">视图<small>(V)</small></span>
<span class="menu" style="left:305px">插入<small>(I)</small></span>
<span class="menu" style="left:357px">工具<small>(T)</small></span>
<span class="menu" style="left:411px">窗口<small>(W)</small></span>
<svg width="18" height="18" viewBox="0 0 20 20" style="position:absolute;left:465px;top:8px"><path d="M11 3 L17 9 L15.2 9.6 L12.8 12 L13 15.5 L9.5 12.2 L4 17 L8.2 11 L5 7.5 L8.4 7.6 L10.6 5 Z" fill="#8a8a8a"/></svg>
<div class="abs" style="left:487px;top:2px;width:1px;height:32px;background:#cfcfcf"></div>
<svg width="20" height="20" viewBox="0 0 20 20" style="position:absolute;left:509px;top:8px"><path d="M1.5 10.5 L10 2.5 L18.5 10.5" fill="none" stroke="#1d5f8c" stroke-width="2.6" stroke-linejoin="miter"/><path d="M4 10.5 V18.5 H16 V10.5 L10 5 Z" fill="#fff" stroke="#222" stroke-width="1.2"/><rect x="8.5" y="12" width="4" height="6.5" fill="#fff" stroke="#222" stroke-width="1"/></svg>
<svg width="20" height="20" viewBox="0 0 20 20" style="position:absolute;left:539px;top:8px"><path d="M4 2.5 H12 L16.5 7 V18.5 H4 Z" fill="#fff" stroke="#333" stroke-width="1.2"/><path d="M12 2.5 V7 H16.5" fill="#ddd" stroke="#333" stroke-width="1"/></svg>
<svg width="20" height="20" viewBox="0 0 20 20" style="position:absolute;left:583px;top:8px"><path d="M2 18 V5 H7 L8.5 7 H14 V9.5" fill="#f4f4f4" stroke="#333" stroke-width="1.2"/><path d="M2 18 L6 9.5 H19 L15 18 Z" fill="#fff" stroke="#333" stroke-width="1.2"/><path d="M9 2 Q14 2 14.5 7 L17 7 L13.5 11 L10 7 L12.3 7 Q12 4 9 4 Z" fill="#2e7fb3" stroke="#1d5f8c" stroke-width=".6"/></svg>
<svg width="20" height="20" viewBox="0 0 20 20" style="position:absolute;left:627px;top:8px"><path d="M2 2 H18 V18 H4.5 L2 15.5 Z" fill="#2e7fb3" stroke="#1d5f8c" stroke-width="1"/><rect x="5" y="2.5" width="10" height="7" fill="#fff"/><rect x="6" y="12" width="8" height="6" fill="#e8e8e8" stroke="#1d5f8c" stroke-width=".6"/><rect x="7.5" y="13.5" width="2.5" height="3.5" fill="#333"/></svg>
<svg width="20" height="20" viewBox="0 0 20 20" style="position:absolute;left:671px;top:8px"><rect x="5" y="2" width="10" height="6" fill="#fff" stroke="#555" stroke-width="1"/><path d="M2 8 H18 Q19 8 19 9 V15 H1 V9 Q1 8 2 8 Z" fill="#2e7fb3" stroke="#1d5f8c" stroke-width="1"/><rect x="4.5" y="13" width="11" height="5.5" fill="#fff" stroke="#1d5f8c" stroke-width="1"/><path d="M6 15 H14 M6 16.8 H14" stroke="#1d5f8c" stroke-width=".8"/></svg>
<svg width="20" height="20" viewBox="0 0 20 20" style="position:absolute;left:714.5px;top:8px"><path d="M3 3 L3.5 10.5 L10.5 8.5 L8 6.8 Q13 5 14.5 10 Q15.5 14 12 17.5 Q19 14 17.5 8.5 Q15.5 2 6.5 4.6 Z" fill="#2e7fb3" stroke="#1d5f8c" stroke-width=".7"/></svg>
<svg width="20" height="20" viewBox="0 0 20 20" style="position:absolute;left:759px;top:8px"><path d="M17 3 L16.5 10.5 L9.5 8.5 L12 6.8 Q7 5 5.5 10 Q4.5 14 8 17.5 Q1 14 2.5 8.5 Q4.5 2 13.5 4.6 Z" fill="#c9c9c9" stroke="#b5b5b5" stroke-width=".7"/></svg>
<i class="dd" style="left:567.5px;top:17px;border-top-color:#333"></i>
<i class="dd" style="left:611px;top:17px;border-top-color:#333"></i>
<i class="dd" style="left:655.5px;top:17px;border-top-color:#333"></i>
<i class="dd" style="left:699px;top:17px;border-top-color:#333"></i>
<i class="dd" style="left:743.5px;top:17px;border-top-color:#333"></i>
<i class="dd" style="left:787px;top:17px;border-top-color:#bbb"></i>
<div class="abs" style="left:798px;top:3px;width:44px;height:30px;border:1px solid #8e8e8e;background:#f7f7f7"></div>
<div class="abs" style="left:798px;top:3px;width:30px;height:30px;border:1px solid #8e8e8e;background:#bdbdbd"></div>
<svg width="20" height="20" viewBox="0 0 20 20" style="position:absolute;left:802px;top:8px"><path d="M5 1.5 V16.5 L8.6 13 L11.3 19 L13.8 17.9 L11.1 12 H16 Z" fill="#fff" stroke="#111" stroke-width="1.2" stroke-linejoin="round"/></svg>
<i class="dd" style="left:831.5px;top:17px;border-top-color:#333"></i>
<svg width="20" height="20" viewBox="0 0 20 20" style="position:absolute;left:847px;top:8px"><rect x="5.5" y="1" width="9" height="18" rx="4.5" fill="#111"/><circle cx="10" cy="5.8" r="2.3" fill="#e8231c"/><circle cx="10" cy="14.2" r="2.3" fill="#1fa834"/></svg>
<svg width="20" height="20" viewBox="0 0 20 20" style="position:absolute;left:877px;top:8px"><rect x="2.5" y="2" width="15" height="16.5" fill="#fff" stroke="#222" stroke-width="1.2"/><rect x="4.5" y="4.5" width="3.2" height="2.6" fill="#8cc4e4" stroke="#1d5f8c" stroke-width=".6"/><rect x="4.5" y="9" width="3.2" height="2.6" fill="#8cc4e4" stroke="#1d5f8c" stroke-width=".6"/><rect x="4.5" y="13.5" width="3.2" height="2.6" fill="#8cc4e4" stroke="#1d5f8c" stroke-width=".6"/><path d="M9.5 5.8 H15.5 M9.5 10.3 H15.5 M9.5 14.8 H15.5" stroke="#222" stroke-width="1"/></svg>
<svg width="20" height="20" viewBox="0 0 20 20" style="position:absolute;left:907px;top:8px"><path d="M18.56 10.84 L18.23 12.50 L15.56 12.97 L14.87 14.00 L15.46 16.65 L14.05 17.58 L11.83 16.03 L10.62 16.27 L9.16 18.56 L7.50 18.23 L7.03 15.56 L6.00 14.87 L3.35 15.46 L2.42 14.05 L3.97 11.83 L3.73 10.62 L1.44 9.16 L1.77 7.50 L4.44 7.03 L5.13 6.00 L4.54 3.35 L5.95 2.42 L8.17 3.97 L9.38 3.73 L10.84 1.44 L12.50 1.77 L12.97 4.44 L14.00 5.13 L16.65 4.54 L17.58 5.95 L16.03 8.17 L16.27 9.38 Z" fill="#fff" stroke="#333" stroke-width="1.1" stroke-linejoin="round"/><circle cx="10" cy="10" r="3" fill="#fff" stroke="#333" stroke-width="1.1"/></svg>
<i class="dd" style="left:935.5px;top:17px;border-top-color:#333"></i>
<span class="abs" style="left:1198px;top:10px;font-size:11.5px;white-space:nowrap;color:#111;letter-spacing:-.32px">DEMO.SLDPRT *</span>
<div class="abs" style="left:1532px;top:6px;width:202px;height:23px;border:1px solid #b9b9b9;background:#fbfbfb"></div>
<svg class="abs" style="left:1538px;top:10px" width="15" height="15" viewBox="0 0 15 15"><rect width="15" height="15" rx="1.5" fill="#1a1a1a"/><path d="M3 4 L7 7.2 L3 10.4 M7.5 11 H12" stroke="#fff" stroke-width="1.4" fill="none"/></svg>
<span class="abs" style="left:1559px;top:7px;font-size:13px;color:#777;white-space:nowrap">搜索命令</span>
<svg class="abs" style="left:1703px;top:10px" width="16" height="16" viewBox="0 0 16 16"><circle cx="6.2" cy="6.2" r="4.2" fill="none" stroke="#888" stroke-width="1.3"/><path d="M9.3 9.3 L14 14" stroke="#888" stroke-width="1.8"/></svg>
<i class="dd" style="left:1724px;top:16px;border-top-color:#666"></i>
<svg class="abs" style="left:1745px;top:7px" width="21" height="21" viewBox="0 0 21 21"><circle cx="10.5" cy="10.5" r="8.6" fill="none" stroke="#222" stroke-width="1.3"/><circle cx="10.5" cy="8.3" r="3" fill="none" stroke="#222" stroke-width="1.3"/><path d="M4.8 16.6 Q10.5 9.5 16.2 16.6" fill="none" stroke="#222" stroke-width="1.3"/></svg>
<svg class="abs" style="left:1781px;top:7px" width="21" height="21" viewBox="0 0 21 21"><circle cx="10.5" cy="10.5" r="8.6" fill="none" stroke="#222" stroke-width="1.3"/><text x="10.5" y="15.2" font-family="'Liberation Sans',sans-serif" font-size="13" text-anchor="middle" fill="#222">?</text></svg>
<div class="abs" style="left:1822px;top:21px;width:10px;height:2px;background:#222"></div>
<svg class="abs" style="left:1855px;top:10px" width="16" height="15" viewBox="0 0 16 15"><path d="M4.5 4 V1 H15 V9 H11.5" fill="none" stroke="#222" stroke-width="1.5"/><rect x="1" y="5" width="10" height="8.5" fill="none" stroke="#222" stroke-width="1.5"/></svg>
<svg class="abs" style="left:1893px;top:12px" width="12" height="12" viewBox="0 0 12 12"><path d="M1 1 L11 11 M11 1 L1 11" stroke="#222" stroke-width="1.7"/></svg>
</div>
<div id="ribbon">
<svg width="20" height="20" viewBox="0 0 20 20" style="position:absolute;left:20px;top:5px"><path d="M2 9 Q6 4 10 8 Q13 11 16 7 L18 14 Q14 18 10.5 15 Q7 12 4.5 16 Z" fill="url(#rb)" stroke="#1d5f8c" stroke-width=".8"/><path d="M11 2 L17 8 M17 3 V8 H12" stroke="#111" stroke-width="2" fill="none"/></svg>
<div class="big" style="left:5px;top:25px">拉伸曲<br>面</div>
<svg width="20" height="20" viewBox="0 0 20 20" style="position:absolute;left:69px;top:5px"><path d="M3 8 Q4 2 11 2 Q18 3 18 10 Q17 17 10 18 Q14 14 14 9 Q13 5 9 5 Q5 5 3 8 Z" fill="url(#rb)" stroke="#1d5f8c" stroke-width=".8"/><path d="M4 7 L15 16" stroke="#333" stroke-width="1"/><path d="M2 9 L5 12 L6 8 Z" fill="#1d5f8c"/></svg>
<div class="big" style="left:54px;top:25px">旋转曲<br>面</div>
<svg width="20" height="20" viewBox="0 0 20 20" style="position:absolute;left:118px;top:5px"><path d="M3 18 Q2 14 7 12 Q10 11 9 7 Q9 2 15 2 L19 4 Q13 5 13.5 8.5 Q14 13 9 15 Q7 16 7 18 Z" fill="url(#rb)" stroke="#1d5f8c" stroke-width=".8"/></svg>
<div class="big" style="left:103px;top:25px">扫描曲<br>面</div>
<svg width="20" height="20" viewBox="0 0 20 20" style="position:absolute;left:167px;top:5px"><path d="M6 2 H14 Q13 7 14.5 10 H18 L10 19 L2 10 H5.5 Q7 7 6 2 Z" fill="url(#rb)" stroke="#1d5f8c" stroke-width=".8"/></svg>
<div class="big" style="left:152px;top:25px">放样曲<br>面</div>
<svg width="20" height="20" viewBox="0 0 20 20" style="position:absolute;left:216px;top:5px"><path d="M2 9 L11 3 L19 8 L16 14 Q12 11 9 17 Q6 13 2 9 Z" fill="url(#rb)" stroke="#1d5f8c" stroke-width=".8"/><path d="M6 6.5 Q10 10 13 15 M11 3 Q13 8 17.5 11" stroke="#bfe0f2" stroke-width=".9" fill="none"/></svg>
<div class="big" style="left:201px;top:25px">边界曲<br>面</div>
<svg width="20" height="20" viewBox="0 0 20 20" style="position:absolute;left:265px;top:5px"><path d="M2 9 L13 2 L19 8 L9 18 Z" fill="#fff" stroke="#555" stroke-width="1"/><path d="M6 9.5 Q9 6 13 6.5 L15 9 Q11 10 9 14 Z" fill="url(#rb)" stroke="#1d5f8c" stroke-width=".6"/></svg>
<div class="big" style="left:250px;top:25px">填充曲<br>面</div>
<svg width="20" height="20" viewBox="0 0 20 20" style="position:absolute;left:314px;top:5px"><path d="M3 12 Q3 7 10 7 Q17 7 17 12 V15 Q17 19 10 19 Q3 19 3 15 Z" fill="#f2f2f2" stroke="#777" stroke-width=".9"/><path d="M3 12 Q3 7 10 7 Q17 7 17 12 Q10 15.5 3 12 Z" fill="url(#rb)" stroke="#1d5f8c" stroke-width=".7"/><path d="M10 9 V2 M7 4.5 L10 1.5 L13 4.5" stroke="#111" stroke-width="1.6" fill="none"/></svg>
<div class="big" style="left:299px;top:25px">自由样<br>式</div>
<i class="vsep" style="left:351px"></i>
<svg width="22" height="22" viewBox="0 0 20 20" style="position:absolute;left:353.5px;top:2.5px"><path d="M2 6 L18 3 V15 L2 18 Z" fill="url(#rb)" stroke="#1d5f8c" stroke-width=".9"/></svg>
<span class="sm" style="left:380px;top:4.5px">平面区域</span>
<svg width="22" height="22" viewBox="0 0 20 20" style="position:absolute;left:353.5px;top:28.5px"><path d="M2 9 Q8 1 18 6 L17 10 Q9 6 4 13 Z" fill="url(#rb)" stroke="#1d5f8c" stroke-width=".8"/><path d="M3 13 Q9 6 18 11 V15 L6 19 L3 16 Z" fill="#f4f4f4" stroke="#666" stroke-width=".9"/></svg>
<span class="sm" style="left:380px;top:30.5px">等距曲面</span>
<svg width="22" height="22" viewBox="0 0 20 20" style="position:absolute;left:353.5px;top:54.5px"><path d="M2 17 Q3 6 17 3 L18 9 Q9 10 8 18 Z" fill="#f4f4f4" stroke="#555" stroke-width="1"/><path d="M4 12 L9 14 M7 8 L11 11 M12 5 L14 9.5" stroke="#2e7fb3" stroke-width="1.4"/></svg>
<span class="sm" style="left:380px;top:56.5px">直纹曲面</span>
<svg width="20" height="20" viewBox="0 0 20 20" style="position:absolute;left:456px;top:5px"><path d="M3 4 Q7 1 10 4 Q13 7 17 4 L18 8 Q14 11 10 8 Q7 5 4 8 Z" fill="url(#rb)" stroke="#1d5f8c" stroke-width=".7"/><path d="M2 14 L7 11 H18 L14 17 H2 Z" fill="#9fd0ea" stroke="#1d5f8c" stroke-width=".8"/><path d="M7 8 V12 M13 9 V12" stroke="#222" stroke-width="1"/></svg>
<div class="big" style="left:441px;top:25px">曲面展<br>平</div>
<svg width="20" height="20" viewBox="0 0 20 20" style="position:absolute;left:499px;top:5px"><path d="M2 7 L8 3 H18 V13 L13 18 H2 Z" fill="#fff" stroke="#555" stroke-width="1"/><path d="M2 7 H9 Q13 7 13 11 V18" fill="none" stroke="#555" stroke-width="1"/><path d="M8 3 Q15 3 18 8 L13 11 Q13 7 9 7 L2 7 Z" fill="#5aa7d4" stroke="#1d5f8c" stroke-width=".6" opacity=".9"/></svg>
<div class="big" style="left:484px;top:25px">圆角</div>
<i class="dd" style="left:505px;top:66px;border-top-color:#333"></i>
<i class="vsep" style="left:528px"></i>
<svg width="22" height="22" viewBox="0 0 20 20" style="position:absolute;left:531.5px;top:2.5px"><path d="M2 6 L7 2 H18 V13 L13 18 H2 Z" fill="#fff" stroke="#555" stroke-width="1"/><path d="M2 6 H13 V18 M13 6 L18 2" fill="none" stroke="#555" stroke-width="1"/><rect x="3.5" y="7.5" width="8" height="9" fill="#9fd0ea"/><path d="M5 9.5 L10.5 15 M10.5 9.5 L5 15" stroke="#111" stroke-width="1.8"/></svg>
<span class="sm" style="left:558px;top:4.5px">删除面</span>
<svg width="22" height="22" viewBox="0 0 20 20" style="position:absolute;left:531.5px;top:28.5px"><path d="M2 5 Q8 2 17 3 L18 8 Q9 7 4 10 Z" fill="url(#rb)" stroke="#1d5f8c" stroke-width=".8"/><path d="M2 12 L6 10 H18 V15 L14 18 H2 Z" fill="#f4f4f4" stroke="#555" stroke-width="1"/><path d="M2 12 H14 V18 M14 12 L18 10" fill="none" stroke="#555" stroke-width="1"/></svg>
<span class="sm" style="left:558px;top:30.5px">替换面</span>
<svg width="22" height="22" viewBox="0 0 20 20" style="position:absolute;left:531.5px;top:54.5px"><path d="M2 10 L9 3 L18 7 L12 16 Z" fill="#f4f4f4" stroke="#555" stroke-width="1"/><ellipse cx="9.5" cy="9" rx="3.6" ry="2.6" fill="#9fd0ea" stroke="#1d5f8c" stroke-width=".7"/><path d="M10.5 12 L16.5 18 M16.5 12 L10.5 18" stroke="#111" stroke-width="1.8"/></svg>
<span class="sm" style="left:558px;top:56.5px">删除孔</span>
<i class="vsep" style="left:609px"></i>
<svg width="22" height="22" viewBox="0 0 20 20" style="position:absolute;left:611.5px;top:2.5px"><path d="M2 8 Q6 3 10 7 L14 4 L17 10 Q12 13 9 11 Q6 10 4 14 Z" fill="url(#rb)" stroke="#1d5f8c" stroke-width=".8"/><path d="M2 8 Q6 3 10 7 L9 11 Q6 10 4 14 Z" fill="#e9f3f9" stroke="#555" stroke-width=".7"/><path d="M12 12 L18 18 M18 13 V18 H13" stroke="#111" stroke-width="1.7" fill="none"/></svg>
<span class="sm" style="left:638px;top:4.5px">延伸曲面</span>
<svg width="22" height="22" viewBox="0 0 20 20" style="position:absolute;left:611.5px;top:28.5px"><path d="M2 9 Q6 3 10 7 Q14 11 18 5 L17.5 12 Q13 18 10 13 Q7 9 3 16 Z" fill="url(#rb)" stroke="#1d5f8c" stroke-width=".8"/><path d="M2 9 Q5 5 8 6" stroke="#222" stroke-width="1.4" fill="none"/></svg>
<span class="sm" style="left:638px;top:30.5px">剪裁曲面</span>
<svg width="22" height="22" viewBox="0 0 20 20" style="position:absolute;left:611.5px;top:54.5px"><path d="M2 9 Q6 3 10 7 Q14 11 18 5 L17.5 12 Q13 18 10 13 Q7 9 3 16 Z" fill="#e9f3f9" stroke="#555" stroke-width=".9"/><path d="M9 7 Q14 11 18 5 L17.5 12 Q13 17 10 12.5 Z" fill="url(#rb)" stroke="#1d5f8c" stroke-width=".6"/></svg>
<span class="sm" style="left:638px;top:56.5px">解除剪裁曲面</span>
<svg width="20" height="20" viewBox="0 0 20 20" style="position:absolute;left:741px;top:5px"><path d="M2 3 Q6 5 8 3 L9 17 H4 Z" fill="#fff" stroke="#555" stroke-width="1"/><path d="M18 3 Q14 5 12 3 L11 17 H16 Z" fill="#fff" stroke="#555" stroke-width="1"/><path d="M10 4 V18" stroke="#2e7fb3" stroke-width="2.4" stroke-dasharray="1.6 1.2"/></svg>
<div class="big" style="left:726px;top:25px">缝合曲<br>面</div>
<i class="vsep" style="left:779px"></i>
<svg width="22" height="22" viewBox="0 0 20 20" style="position:absolute;left:782.5px;top:2.5px"><path d="M2 8 L7 4 H14 V13 L9 17 H2 Z" fill="url(#rb)" stroke="#1d5f8c" stroke-width=".9"/><path d="M2 8 H9 V17 M9 8 L14 4" fill="none" stroke="#bfe0f2" stroke-width=".8"/><path d="M17 4 V14 M14.5 11.5 L17 14.5 L19.5 11.5" stroke="#111" stroke-width="1.5" fill="none"/></svg>
<span class="sm" style="left:809px;top:4.5px">加厚</span>
<svg width="22" height="22" viewBox="0 0 20 20" style="position:absolute;left:782.5px;top:28.5px"><path d="M2 9 L7 5 H14 V14 L9 18 H2 Z" fill="#f4f4f4" stroke="#555" stroke-width="1"/><path d="M4 10 Q8 6 12 8 L11 13 Q7 12 5 15 Z" fill="url(#rb)" stroke="#1d5f8c" stroke-width=".7"/><path d="M17 2 V11 M14.5 8.5 L17 11.5 L19.5 8.5" stroke="#111" stroke-width="1.5" fill="none"/></svg>
<span class="sm" style="left:809px;top:30.5px">加厚切除</span>
<svg width="22" height="22" viewBox="0 0 20 20" style="position:absolute;left:782.5px;top:54.5px"><path d="M3 4 L8 2 H18 L13 5 Z M3 4 H13 V8 H3 Z M13 4 L18 2 V6 L13 8" fill="#f4f4f4" stroke="#555" stroke-width=".9"/><path d="M1 11 Q6 8 10 10 Q14 12 19 9 L18 13 Q14 16 10 14 Q6 12 2 15 Z" fill="url(#rb)" stroke="#1d5f8c" stroke-width=".7"/><path d="M3 16 H13 V19 H3 Z M13 16 L18 13.5 V17 L13 19" fill="#f4f4f4" stroke="#555" stroke-width=".9"/></svg>
<span class="sm" style="left:809px;top:56.5px">使用曲面切除</span>
<i class="vsep" style="left:898px"></i>
<svg width="20" height="20" viewBox="0 0 20 20" style="position:absolute;left:914px;top:5px"><path d="M8 5 L14 3 V15 L8 18 Z" fill="#5aa7d4" stroke="#1d5f8c" stroke-width=".8"/><path d="M11 1 V19" stroke="#333" stroke-width="1" stroke-dasharray="3 1.5"/><circle cx="4" cy="3.5" r="1.8" fill="#fff" stroke="#1d5f8c" stroke-width="1"/></svg>
<div class="big" style="left:899px;top:25px">参考几<br>何体</div>
<svg width="20" height="20" viewBox="0 0 20 20" style="position:absolute;left:957px;top:5px"><path d="M3 3 Q7 2 7 8 Q7 17 11 17 Q15 17 13 9 Q12 3 17 3" fill="none" stroke="#2e7fb3" stroke-width="1.6"/></svg>
<div class="big" style="left:942px;top:25px">曲线</div>
<svg width="20" height="20" viewBox="0 0 20 20" style="position:absolute;left:993px;top:5px"><ellipse cx="10" cy="5" rx="7.5" ry="3" fill="#fff" stroke="#555" stroke-width="1"/><path d="M2.5 5 V15 Q2.5 18 10 18 Q17.5 18 17.5 15 V5 Q17.5 8 10 8 Q2.5 8 2.5 5 Z" fill="url(#rb)" stroke="#1d5f8c" stroke-width=".8"/><path d="M5 10.5 H8.5 V15 H5 Z M11 10.5 H15 V15 H11 Z" fill="#bfe0f2"/></svg>
<div class="big" style="left:978px;top:25px">包覆</div>
<svg width="20" height="20" viewBox="0 0 20 20" style="position:absolute;left:1029px;top:5px"><path d="M2 7 L8 3 H18 V13 L13 18 H2 Z" fill="#fff" stroke="#555" stroke-width="1"/><path d="M2 7 H13 V18 M13 7 L18 3" fill="none" stroke="#555" stroke-width="1"/><path d="M7.5 5 L12.5 2 V14 L7.5 17 Z" fill="url(#rb)" stroke="#1d5f8c" stroke-width=".7" opacity=".92"/></svg>
<div class="big" style="left:1014px;top:25px">中面</div>
<i class="dd" style="left:921px;top:66px;border-top-color:#333"></i>
<i class="dd" style="left:963px;top:66px;border-top-color:#333"></i>
<svg class="abs" style="left:1899px;top:63px" width="12" height="8" viewBox="0 0 12 8"><path d="M1.5 6.5 L6 2 L10.5 6.5" fill="none" stroke="#222" stroke-width="1.8"/></svg>
</div>
<div id="tabs">
<div class="tab" style="left:0px;width:56px">特征</div>
<div class="tab" style="left:56px;width:56px">草图</div>
<div class="tab" style="left:112px;width:56px">焊件</div>
<div class="tab" style="left:168px;width:56px">钣金</div>
<div class="tab act" style="left:224px;width:56px">曲面</div>
<div class="tab" style="left:280px;width:67px">直接编辑</div>
<div class="tab" style="left:347px;width:56px">评估</div>
<div class="tab" style="left:403px;width:107px;font-size:12px;letter-spacing:-.35px">MBD Dimensions</div>
<div class="tab" style="left:510px;width:118px;font-size:12px;letter-spacing:-.35px">SOLIDWORKS 插件</div>
</div>
<div id="leftpanel">
<div class="abs" style="left:0;top:4px;width:238px;height:1px;background:#d0d0d0"></div>
<div class="abs" style="left:0;top:19px;width:238px;height:1px;background:#d0d0d0"></div>
<div class="abs" style="left:117px;top:9px;width:6px;height:6px;border-radius:50%;background:#cfcfcf;border:1px solid #a8a8a8"></div>
<div class="abs" style="left:2px;top:49px;width:236px;height:1px;background:#cfcfcf"></div>
<div class="abs" style="left:41px;top:24px;width:41px;height:26px;background:#d2d2d2;border:1px solid #a6a6a6"></div>
<div class="abs" style="left:81px;top:24px;width:41px;height:26px;background:#d2d2d2;border:1px solid #a6a6a6"></div>
<div class="abs" style="left:121px;top:24px;width:41px;height:26px;background:#d2d2d2;border:1px solid #a6a6a6"></div>
<div class="abs" style="left:161px;top:24px;width:41px;height:26px;background:#d2d2d2;border:1px solid #a6a6a6"></div>
<div class="abs" style="left:2px;top:24px;width:40px;height:1px;background:#cfcfcf"></div>
<svg width="22" height="22" viewBox="0 0 20 20" style="position:absolute;left:11px;top:27px"><path d="M2 9 L8 6 V3 L12 1.5 L16 3.5 V8 L19 9.5 V14.5 L11 19 L2 14 Z" fill="#f2c81e" stroke="#9c7a08" stroke-width="1"/><path d="M2 9 L11 13.5 L19 9.5 M11 13.5 V19 M8 6 L12 8 L16 6 M12 8 V11" fill="none" stroke="#9c7a08" stroke-width=".8"/></svg>
<svg width="20" height="20" viewBox="0 0 20 20" style="position:absolute;left:52px;top:27px"><rect x="2" y="2" width="16" height="16" rx="1" fill="#fff" stroke="#1d3f5c" stroke-width="1.2"/><rect x="2" y="2" width="16" height="3.2" fill="#5aa7d4"/><rect x="4" y="7" width="3.5" height="2.2" fill="#5aa7d4" stroke="#1d5f8c" stroke-width=".5"/><rect x="4" y="10.6" width="3.5" height="2.2" fill="#5aa7d4" stroke="#1d5f8c" stroke-width=".5"/><rect x="4" y="14.2" width="3.5" height="2.2" fill="#5aa7d4" stroke="#1d5f8c" stroke-width=".5"/><path d="M9.5 8.1 H16 M9.5 11.7 H16 M9.5 15.3 H16" stroke="#222" stroke-width="1"/></svg>
<svg width="20" height="20" viewBox="0 0 20 20" style="position:absolute;left:92px;top:27px"><path d="M4 2 V18 M4 4 H8 M4 15 H10" stroke="#222" stroke-width="1.4" fill="none"/><rect x="8" y="2" width="6" height="5" fill="#fff" stroke="#222" stroke-width="1.2"/><rect x="11" y="8" width="5" height="4.5" fill="#fff" stroke="#222" stroke-width="1.2"/><rect x="11" y="13.5" width="5.5" height="5" fill="#fff" stroke="#222" stroke-width="1.2"/><path d="M7 10 H11" stroke="#222" stroke-width="1.2"/></svg>
<svg width="20" height="20" viewBox="0 0 20 20" style="position:absolute;left:132px;top:27px"><circle cx="10" cy="10" r="5.6" fill="none" stroke="#111" stroke-width="1.8"/><path d="M10 1 V19 M1 10 H19" stroke="#111" stroke-width="1.6"/></svg>
<svg width="20" height="20" viewBox="0 0 20 20" style="position:absolute;left:172px;top:26px"><defs><clipPath id="ball"><circle cx="10" cy="10" r="8.6"/></clipPath><radialGradient id="ballsh" cx=".35" cy=".3" r=".75"><stop offset="0" stop-color="#fff" stop-opacity=".55"/><stop offset=".6" stop-color="#fff" stop-opacity="0"/><stop offset="1" stop-color="#000" stop-opacity=".25"/></radialGradient></defs><g clip-path="url(#ball)"><rect x="0" y="0" width="10" height="11" fill="#2a6fd0"/><rect x="8" y="0" width="12" height="11" fill="#d8261c"/><rect x="0" y="11" width="9" height="10" fill="#2fa82f"/><rect x="9" y="11" width="11" height="10" fill="#f2c21a"/><path d="M0 11 Q10 9 20 11" stroke="#f6e9b0" stroke-width=".8" fill="none"/><ellipse cx="12.6" cy="7.2" rx="2.9" ry="4.8" transform="rotate(-32 12.6 7.2)" fill="#1a0f0f"/></g><circle cx="10" cy="10" r="8.6" fill="url(#ballsh)"/></svg>
<svg class="abs" style="left:224px;top:30px" width="10" height="14" viewBox="0 0 10 14"><path d="M2 1.5 L7.5 7 L2 12.5" fill="none" stroke="#222" stroke-width="1.8"/></svg>
<div class="abs" style="left:5px;top:50px;width:233px;height:26px;border:1px solid #c9c9c9;background:#f7f7f7"></div>
<svg width="18" height="20" viewBox="0 0 18 20" style="position:absolute;left:7px;top:53px"><path d="M1 3 H17 L10.5 10.5 V17.5 L7.5 16 V10.5 Z" fill="#fff" stroke="#333" stroke-width="1.1" stroke-linejoin="round"/><path d="M1 2.2 H17 V4.2 H1 Z" fill="#3b9bd0" stroke="#1d5f8c" stroke-width=".6"/></svg>
<div class="abs" style="left:1px;top:52px;width:1px;height:770px;background:#d9d9d9"></div>
<svg width="21" height="21" viewBox="0 0 20 20" style="position:absolute;left:3px;top:77px"><path d="M2 9 L8 6 V3 L12 1.5 L16 3.5 V8 L19 9.5 V14.5 L11 19 L2 14 Z" fill="#f2c81e" stroke="#9c7a08" stroke-width="1"/><path d="M2 9 L11 13.5 L19 9.5 M11 13.5 V19 M8 6 L12 8 L16 6 M12 8 V11" fill="none" stroke="#9c7a08" stroke-width=".8"/></svg>
<span class="abs" style="left:27px;top:78px;font-size:12px;white-space:nowrap;letter-spacing:.52px;width:213px;overflow:hidden">DEMO (默认&lt;按加工&gt;) &lt;&lt;默认&gt;_显示</span>
<div class="row" style="top:99px"><i class="ar"></i><svg width="20" height="19" viewBox="0 0 20 20" style=""><path d="M1.5 17.5 V3.5 H7.5 L9 5.5 H18.5 V17.5 Z" fill="#f3f3f3" stroke="#555" stroke-width="1"/><circle cx="10.5" cy="11.5" r="4.2" fill="#fff" stroke="#333" stroke-width="1"/><path d="M10.5 9 V11.7 L12.6 12.8" stroke="#333" stroke-width="1" fill="none"/><path d="M4.5 10 L6.8 13.4 L8.6 9.8 Z" fill="#2e7fb3"/></svg><span class="tx">历史记录</span></div>
<div class="row" style="top:121px"><svg width="20" height="19" viewBox="0 0 20 20" style=""><path d="M1.5 17.5 V3.5 H7.5 L9 5.5 H18.5 V17.5 Z" fill="#f3f3f3" stroke="#555" stroke-width="1"/><circle cx="10.5" cy="11.5" r="4.4" fill="#fff" stroke="#333" stroke-width="1.1"/><path d="M10.5 11.5 L13 9" stroke="#333" stroke-width="1.1"/><path d="M10.5 11.5 L14.6 13.2 A4.4 4.4 0 0 1 11.5 15.8 Z" fill="#e43a1f"/></svg><span class="tx">传感器</span></div>
<div class="row" style="top:143px"><i class="ar"></i><svg width="20" height="19" viewBox="0 0 20 20" style=""><path d="M1.5 17.5 V3.5 H7.5 L9 5.5 H18.5 V17.5 Z" fill="#f3f3f3" stroke="#555" stroke-width="1"/><text x="10.3" y="16" font-family="'Liberation Serif',serif" font-weight="bold" font-size="11.5" text-anchor="middle" fill="#1d5f8c">A</text></svg><span class="tx">注解</span></div>
<div class="row" style="top:165px"><i class="ar"></i><svg width="20" height="19" viewBox="0 0 20 20" style=""><rect x="2" y="1.5" width="12" height="10" fill="#fff" stroke="#444" stroke-width="1"/><path d="M2 4.5 H14 M2 8 H14 M6 1.5 V11.5 M10 1.5 V11.5" stroke="#444" stroke-width=".8"/><path d="M11 11.5 L13.8 14.3 M19 11.5 L16.2 14.3 M11 18.5 L13.8 15.7 M19 18.5 L16.2 15.7 M11 13.5 V11.5 H13 M17 11.5 H19 V13.5 M11 16.5 V18.5 H13 M17 18.5 H19 V16.5" stroke="#2e7fb3" stroke-width="1.300" fill="none"/></svg><span class="tx">切割清单(1)</span></div>
<div class="row" style="top:187px"><i class="ar"></i><svg width="20" height="19" viewBox="0 0 20 20" style=""><path d="M1.5 17.5 V3.5 H7.5 L9 5.5 H18.5 V17.5 Z" fill="#f3f3f3" stroke="#555" stroke-width="1"/><path d="M4 11 Q8 7 11 9.5 Q14 12 17 9 L16 13 Q13 16.5 10.5 14 Q8 12 5.5 15.5 Z" fill="#2e7fb3" stroke="#1d5f8c" stroke-width=".6"/></svg><span class="tx">曲面实体(1)</span></div>
<div class="row" style="top:209px"><i class="ar"></i><svg width="20" height="19" viewBox="0 0 20 20" style=""><path d="M1.5 17.5 V3.5 H7.5 L9 5.5 H18.5 V17.5 Z" fill="#f3f3f3" stroke="#555" stroke-width="1"/><text x="10.3" y="16" font-family="'Liberation Serif',serif" font-size="12" text-anchor="middle" fill="#111">Σ</text></svg><span class="tx">方程式</span></div>
<div class="row" style="top:231px"><svg width="20" height="19" viewBox="0 0 20 20" style=""><path d="M6 3 H17 M6 9 H17 M6 15 H12" stroke="#222" stroke-width="1.6"/><circle cx="2.6" cy="3" r="1.8" fill="#fff" stroke="#555" stroke-width=".9"/><circle cx="2.6" cy="9" r="1.8" fill="#58a5d6" stroke="#1d5f8c" stroke-width=".7"/><circle cx="2.6" cy="15" r="1.8" fill="#f2c81e" stroke="#9c7a08" stroke-width=".7"/><circle cx="15.5" cy="15.5" r="2.6" fill="#222"/><path d="M15.5 11.5 V19.5 M11.5 15.5 H19.5 M12.7 12.7 L18.3 18.3 M18.3 12.7 L12.7 18.3" stroke="#222" stroke-width="1.3"/><circle cx="15.5" cy="15.5" r="1" fill="#fff"/></svg><span class="tx">Q235-B</span></div>
<div class="row" style="top:253px"><svg width="20" height="19" viewBox="0 0 20 20" style=""><path d="M4 5 L15 2.5 V15 L4 17.5 Z" fill="#fff" stroke="#333" stroke-width="1.1"/><path d="M9.5 1 V19.5" stroke="#333" stroke-width="1" stroke-dasharray="3.5 1.5"/></svg><span class="tx">前视基准面</span></div>
<div class="row" style="top:275px"><svg width="20" height="19" viewBox="0 0 20 20" style=""><path d="M4 5 L15 2.5 V15 L4 17.5 Z" fill="#fff" stroke="#333" stroke-width="1.1"/><path d="M9.5 1 V19.5" stroke="#333" stroke-width="1" stroke-dasharray="3.5 1.5"/></svg><span class="tx">上视基准面</span></div>
<div class="row" style="top:297px"><svg width="20" height="19" viewBox="0 0 20 20" style=""><path d="M4 5 L15 2.5 V15 L4 17.5 Z" fill="#fff" stroke="#333" stroke-width="1.1"/><path d="M9.5 1 V19.5" stroke="#333" stroke-width="1" stroke-dasharray="3.5 1.5"/></svg><span class="tx">右视基准面</span></div>
<div class="row" style="top:319px"><svg width="20" height="19" viewBox="0 0 20 20" style=""><path d="M4 3 V16 H17" stroke="#111" stroke-width="2" fill="none"/><path d="M4 0.5 L1.5 4.5 H6.5 Z M19.5 16 L15.5 13.5 V18.5 Z" fill="#111"/></svg><span class="tx">原点</span></div>
<div class="row" style="top:341px"><svg width="20" height="19" viewBox="0 0 20 20" style=""><path d="M5 8 L12 4 L18 7 V14 L10 18.5 L5 15 Z" fill="#f2f2f2" stroke="#555" stroke-width="1"/><path d="M9 12 L14 9.5 L17 12 V14 L10.5 17.5 L9 15 Z" fill="url(#rb)"/><path d="M7 9 L2 3" stroke="#333" stroke-width="1.2"/><path d="M7 4 L8 7.2 L11.2 6 L9.5 9 L12.5 10.5 L9.2 11.2 L9.8 14.5 L7.2 12.2 L4.8 14.6 L5 11.2 L1.8 10.6 L4.6 8.8 L3 6 L6 7 Z" fill="#f29a1e" stroke="#d06410" stroke-width=".5"/></svg><span class="tx">焊件</span></div>
<div class="row" style="top:363px"><svg width="20" height="19" viewBox="0 0 20 20" style=""><path d="M4 5 L15 2.5 V15 L4 17.5 Z" fill="#fff" stroke="#333" stroke-width="1.1"/><path d="M9.5 1 V19.5" stroke="#333" stroke-width="1" stroke-dasharray="3.5 1.5"/></svg><span class="tx">基准面1</span></div>
<div class="row" style="top:385px"><i class="ar"></i><svg width="20" height="19" viewBox="0 0 20 20" style=""><path d="M1.5 17.5 V3.5 H7.5 L9 5.5 H18.5 V17.5 Z" fill="#f3f3f3" stroke="#555" stroke-width="1"/><rect x="5.5" y="7.5" width="9.5" height="8" fill="#bfe0f2" stroke="#1d5f8c" stroke-width="1" stroke-dasharray="2 1"/><circle cx="10.3" cy="11.5" r="1.8" fill="#fff" stroke="#222" stroke-width="1.1"/></svg><span class="tx">钣金</span></div>
<div class="row" style="top:407px"><i class="ar"></i><svg width="20" height="19" viewBox="0 0 20 20" style=""><path d="M7 3 Q10 1.5 13 3 L14 11 Q16 16 18.5 17 L11.5 19 L10 14 L8.5 19 L1.5 17 Q4 16 6 11 Z" fill="url(#rb)" stroke="#1d5f8c" stroke-width=".8"/><path d="M8.6 3.6 Q8.8 10 8.8 14 M11.4 3.6 Q11.2 10 11.2 14" stroke="#cfe8f5" stroke-width=".9" fill="none"/></svg><span class="tx">放样折弯1</span></div>
<div class="row" style="top:429px"><i class="ar"></i><svg width="20" height="19" viewBox="0 0 20 20" style=""><path d="M1.5 6 L19 2.5 V15.5 L1.5 19 Z" fill="url(#rb)" stroke="#1d5f8c" stroke-width=".9"/></svg><span class="tx">曲面-基准面1</span></div>
<div class="row" style="top:451px;color:#a0a0a0"><i class="ar"></i><svg width="20" height="19" viewBox="0 0 20 20" style=""><path d="M1.5 17.5 V3.5 H7.5 L9 5.5 H18.5 V17.5 Z" fill="#ededed" stroke="#b5b5b5" stroke-width="1"/><path d="M4.5 12 L8 9.5 H16 L13 13 V15.5 H4.5 Z" fill="#dcdcdc" stroke="#b0b0b0" stroke-width=".9"/><ellipse cx="10.5" cy="11.6" rx="2.4" ry="1.1" fill="#f5f5f5" stroke="#b0b0b0" stroke-width=".7"/></svg><span class="tx">平板型式</span></div>
<div class="abs" style="left:0;top:471px;width:241px;height:3px;background:#2e8bc8"></div>
<div class="abs" style="left:0;top:804px;width:238px;height:19px;background:#eeeeee;border-top:1px solid #fdfdfd"></div>
<div class="abs" style="left:18px;top:812px;width:173px;height:2px;background:#8a8a8a"></div>
<div class="abs" style="left:0;top:823px;width:241px;height:1px;background:#d4d4d4"></div>
</div>
<div class="abs" style="left:242px;top:521px;width:7px;height:38px;background:#f4f4f4;border:1px solid #9a9a9a;border-left:none"></div><div class="abs" style="left:243px;top:537px;width:5px;height:5px;border-radius:50%;background:#ddd;border:1px solid #999"></div>
<div id="bottombar">
<div class="abs" style="left:0;top:0;width:67px;height:15px;background:#8fb4c4"></div>
<svg class="abs" style="left:2px;top:0" width="16" height="15" viewBox="0 0 16 15"><rect x=".5" y=".5" width="15" height="14" fill="#a9a9a9" stroke="#8d8d8d"/><path d="M3 3 V11 M11 3 L5 7 L11 11 Z" fill="#8a8a8a" stroke="#8a8a8a" stroke-width="1.2"/></svg>
<svg class="abs" style="left:18px;top:0" width="16" height="15" viewBox="0 0 16 15"><rect x=".5" y=".5" width="15" height="14" fill="#a9a9a9" stroke="#8d8d8d"/><path d="M10.5 3 L4.5 7 L10.5 11 Z" fill="#8a8a8a" stroke="#8a8a8a" stroke-width="1.2"/></svg>
<svg class="abs" style="left:34px;top:0" width="16" height="15" viewBox="0 0 16 15"><rect x=".5" y=".5" width="15" height="14" fill="#a9a9a9" stroke="#8d8d8d"/><path d="M4.5 3 L10.5 7 L4.5 11 Z" fill="#8a8a8a" stroke="#8a8a8a" stroke-width="1.2"/></svg>
<svg class="abs" style="left:50px;top:0" width="16" height="15" viewBox="0 0 16 15"><rect x=".5" y=".5" width="15" height="14" fill="#a9a9a9" stroke="#8d8d8d"/><path d="M12 3 V11 M4 3 L10 7 L4 11 Z" fill="#8a8a8a" stroke="#8a8a8a" stroke-width="1.2"/></svg>
<span class="abs" style="left:79px;top:-3px;font-size:13px;line-height:18px;white-space:nowrap">模型</span>
<div class="abs" style="left:114px;top:-1px;width:85px;height:16px;background:#d2d2d2;border:1px solid #a6a6a6;font-size:13px;line-height:14px;padding-left:7px;white-space:nowrap;letter-spacing:-.2px">运动算例 1</div>
<div class="abs" style="left:0;top:15px;width:1919px;height:1px;background:#ededed"></div>
<div class="abs" style="left:3px;top:20px;width:3px;height:26px;background:repeating-linear-gradient(#777 0 2px,transparent 2px 4px)"></div>
<svg class="abs" style="left:15px;top:18px" width="130" height="30" viewBox="15 983 130 30"><path d="M21 992 h12 l-4.2 4.6 v6 h-3.6 v-6 z" fill="#e6e6e6" stroke="#c4c4c4" stroke-width=".8"/><path d="M44.2 988.0 h9.600000000000001 l-3.3600000000000003 3.6799999999999997 v4.800000000000001 h-2.8800000000000003 v-4.800000000000001 z" fill="#efefef" stroke="#c8c8c8" stroke-width=".8"/><path d="M48.2 992.0 h9.600000000000001 l-3.3600000000000003 3.6799999999999997 v4.800000000000001 h-2.8800000000000003 v-4.800000000000001 z" fill="#efefef" stroke="#c8c8c8" stroke-width=".8"/><path d="M52.2 996.0 h9.600000000000001 l-3.3600000000000003 3.6799999999999997 v4.800000000000001 h-2.8800000000000003 v-4.800000000000001 z" fill="#efefef" stroke="#c8c8c8" stroke-width=".8"/><path d="M71.2 988.0 h9.600000000000001 l-3.3600000000000003 3.6799999999999997 v4.800000000000001 h-2.8800000000000003 v-4.800000000000001 z" fill="#c050d8" stroke="#7a2090" stroke-width=".8"/><path d="M75.2 992.0 h9.600000000000001 l-3.3600000000000003 3.6799999999999997 v4.800000000000001 h-2.8800000000000003 v-4.800000000000001 z" fill="#c050d8" stroke="#7a2090" stroke-width=".8"/><path d="M79.2 996.0 h9.600000000000001 l-3.3600000000000003 3.6799999999999997 v4.800000000000001 h-2.8800000000000003 v-4.800000000000001 z" fill="#c050d8" stroke="#7a2090" stroke-width=".8"/></svg>
<div class="abs" style="left:95px;top:19px;width:44px;height:27px;background:#b9b9b9;border:1px solid #8e8e8e"></div>
<svg width="20" height="20" viewBox="0 0 20 20" style="position:absolute;left:97px;top:23px"><path d="M5 1.5 V16.5 L8.6 13 L11.3 19 L13.8 17.9 L11.1 12 H16 Z" fill="#fff" stroke="#111" stroke-width="1.2" stroke-linejoin="round"/></svg>
<i class="dd" style="left:128px;top:31px;border-top-color:#333"></i>
<svg width="20" height="20" viewBox="0 0 20 20" style="position:absolute;left:142px;top:23px"><path d="M5 1.5 V16.5 L8.6 13 L11.3 19 L13.8 17.9 L11.1 12 H16 Z" fill="#f0f0f0" stroke="#cfcfcf" stroke-width="1.2"/><path d="M9 5 L17 13 L13 13 L15 17 L13 18 Z" fill="#c8c8c8"/></svg>
<div class="abs" style="left:168px;top:21px;width:1px;height:24px;background:#9a9a9a"></div>
<svg class="abs" style="left:176px;top:21px" width="26" height="24" viewBox="0 0 26 24"><g transform="translate(2 2)"><circle cx="7" cy="6.5" r="2.6" fill="url(#rb)" stroke="#1d5f8c" stroke-width=".9"/></g><path d="M15 13 h7 l-2.4 2.8 v4 h-2.2 v-4 z" fill="#a838c4" stroke="#84289c" stroke-width=".5"/></svg>
<svg class="abs" style="left:203px;top:21px" width="26" height="24" viewBox="0 0 26 24"><g transform="translate(2 2)"><path d="M6.5 0 V19" stroke="#2e7fb3" stroke-width="2"/></g><path d="M15 13 h7 l-2.4 2.8 v4 h-2.2 v-4 z" fill="#a838c4" stroke="#84289c" stroke-width=".5"/></svg>
<svg class="abs" style="left:230px;top:21px" width="26" height="24" viewBox="0 0 26 24"><g transform="translate(2 2)"><rect x="1.5" y="1.5" width="13" height="12.5" fill="url(#rb)" stroke="#1d5f8c" stroke-width="1"/></g><path d="M15 13 h7 l-2.4 2.8 v4 h-2.2 v-4 z" fill="#a838c4" stroke="#84289c" stroke-width=".5"/></svg>
<svg class="abs" style="left:257px;top:21px" width="26" height="24" viewBox="0 0 26 24"><g transform="translate(2 2)"><path d="M1 8 Q5 2 9 6 Q12 9 16 4 L15 11 Q12 16 8.5 12 Q6 9 3 14 Z" fill="url(#rb)" stroke="#1d5f8c" stroke-width=".8"/></g><path d="M15 13 h7 l-2.4 2.8 v4 h-2.2 v-4 z" fill="#a838c4" stroke="#84289c" stroke-width=".5"/></svg>
<svg class="abs" style="left:284px;top:21px" width="26" height="24" viewBox="0 0 26 24"><g transform="translate(2 2)"><path d="M2 5 L7 2 H16 V11 L11 15 H2 Z" fill="url(#rb)" stroke="#1d5f8c" stroke-width="1"/><path d="M2 5 H11 V15 M11 5 L16 2" fill="none" stroke="#1d5f8c" stroke-width=".9"/></g><path d="M15 13 h7 l-2.4 2.8 v4 h-2.2 v-4 z" fill="#a838c4" stroke="#84289c" stroke-width=".5"/></svg>
<svg class="abs" style="left:311px;top:21px" width="26" height="24" viewBox="0 0 26 24"><g transform="translate(2 2)"><path d="M1 15 L15 1" stroke="#2e7fb3" stroke-width="1.8" stroke-dasharray="3 1.6"/></g><path d="M15 13 h7 l-2.4 2.8 v4 h-2.2 v-4 z" fill="#a838c4" stroke="#84289c" stroke-width=".5"/></svg>
<svg class="abs" style="left:338px;top:21px" width="26" height="24" viewBox="0 0 26 24"><g transform="translate(2 2)"><path d="M3 5 L11 2 V13 L3 16 Z" fill="url(#rb)" stroke="#1d5f8c" stroke-width=".9"/><path d="M7 0 V18" stroke="#1d3f5c" stroke-width="1"/></g><path d="M15 13 h7 l-2.4 2.8 v4 h-2.2 v-4 z" fill="#a838c4" stroke="#84289c" stroke-width=".5"/></svg>
<svg class="abs" style="left:365px;top:21px" width="26" height="24" viewBox="0 0 26 24"><g transform="translate(2 2)"><rect x="4.5" y="4" width="5" height="5" fill="url(#rb)" stroke="#1d5f8c" stroke-width="1"/></g><path d="M15 13 h7 l-2.4 2.8 v4 h-2.2 v-4 z" fill="#a838c4" stroke="#84289c" stroke-width=".5"/></svg>
<svg class="abs" style="left:392px;top:21px" width="26" height="24" viewBox="0 0 26 24"><g transform="translate(2 2)"><path d="M2 1.5 H13 M2 1.5 V9 Q2 14 7 14 H13" fill="none" stroke="#2e7fb3" stroke-width="1.8"/><path d="M8 4 V12 M11 4 V12 M14 4 V12 M6 5.5 H16 M6 8.5 H16 M6 11.5 H16" stroke="#d0d0d0" stroke-width=".8"/></g><path d="M15 13 h7 l-2.4 2.8 v4 h-2.2 v-4 z" fill="#a838c4" stroke="#84289c" stroke-width=".5"/></svg>
<svg class="abs" style="left:419px;top:21px" width="26" height="24" viewBox="0 0 26 24"><g transform="translate(2 2)"><path d="M3 2.5 H14 M3 2.5 V15.5" stroke="#111" stroke-width="1.5" fill="none"/><rect x="1.5" y="1" width="3" height="3" fill="#fff" stroke="#111" stroke-width="1"/><rect x="13" y="1" width="3" height="3" fill="#fff" stroke="#111" stroke-width="1"/><rect x="1.5" y="14" width="3" height="3" fill="#fff" stroke="#111" stroke-width="1"/></g><path d="M15 13 h7 l-2.4 2.8 v4 h-2.2 v-4 z" fill="#a838c4" stroke="#84289c" stroke-width=".5"/></svg>
<svg class="abs" style="left:446px;top:21px" width="26" height="24" viewBox="0 0 26 24"><g transform="translate(2 2)"><path d="M1 15 L15 1" stroke="#2e7fb3" stroke-width="1.8"/><rect x="6" y="6" width="4" height="4" fill="#fff" stroke="#111" stroke-width="1"/></g><path d="M15 13 h7 l-2.4 2.8 v4 h-2.2 v-4 z" fill="#a838c4" stroke="#84289c" stroke-width=".5"/></svg>
<svg class="abs" style="left:473px;top:21px" width="26" height="24" viewBox="0 0 26 24"><g transform="translate(2 2)"><circle cx="7.5" cy="8" r="4.5" fill="none" stroke="#111" stroke-width="1.6"/><circle cx="7.5" cy="8" r="1.8" fill="url(#rb)"/><path d="M7.5 0 V16 M0 8 H15" stroke="#111" stroke-width="1.2"/></g><path d="M15 13 h7 l-2.4 2.8 v4 h-2.2 v-4 z" fill="#a838c4" stroke="#84289c" stroke-width=".5"/></svg>
<svg class="abs" style="left:500px;top:21px" width="26" height="24" viewBox="0 0 26 24"><g transform="translate(2 2)"><path d="M3 2 H8 V16 H3 Z M8 6 H13" fill="#fff" stroke="#333" stroke-width="1.1"/><path d="M0 9 H17" stroke="#2e7fb3" stroke-width="1" stroke-dasharray="2.5 1.2"/></g><path d="M15 13 h7 l-2.4 2.8 v4 h-2.2 v-4 z" fill="#a838c4" stroke="#84289c" stroke-width=".5"/></svg>
<svg class="abs" style="left:527px;top:21px" width="26" height="24" viewBox="0 0 26 24"><g transform="translate(2 2)"><path d="M2 7 L8 1.5 L14 8 L8.5 13.5 Z" fill="#fff" stroke="#222" stroke-width="1.3"/><path d="M5 10 L8.5 13.5 L14 8" stroke="#2e7fb3" stroke-width="1.8" fill="none"/><path d="M6 5 L8 3" stroke="#222" stroke-width="1.2"/></g><path d="M15 13 h7 l-2.4 2.8 v4 h-2.2 v-4 z" fill="#a838c4" stroke="#84289c" stroke-width=".5"/></svg>
<svg class="abs" style="left:554px;top:21px" width="26" height="24" viewBox="0 0 26 24"><g transform="translate(2 2)"><path d="M1 9 L5 16 L10 1.5 H17" fill="none" stroke="#111" stroke-width="1.7"/></g><path d="M15 13 h7 l-2.4 2.8 v4 h-2.2 v-4 z" fill="#a838c4" stroke="#84289c" stroke-width=".5"/></svg>
<svg class="abs" style="left:581px;top:21px" width="26" height="24" viewBox="0 0 26 24"><g transform="translate(2 2)"><rect x="0.5" y="2" width="18" height="8" fill="#fff" stroke="#111" stroke-width="1"/><path d="M9 2 V10" stroke="#111" stroke-width="1"/><rect x="2.5" y="4.5" width="4.5" height="3" rx="1.4" fill="none" stroke="#111" stroke-width=".9"/><path d="M11 4 V8 M13 4 H15.5 V6 H13.5 M15.5 6 V8 H13" stroke="#111" stroke-width=".9" fill="none"/></g><path d="M15 13 h7 l-2.4 2.8 v4 h-2.2 v-4 z" fill="#a838c4" stroke="#84289c" stroke-width=".5"/></svg>
<svg class="abs" style="left:608px;top:21px" width="26" height="24" viewBox="0 0 26 24"><g transform="translate(2 2)"><circle cx="10" cy="7" r="5.2" fill="#fff" stroke="#111" stroke-width="1.2"/><path d="M6 11 L1 17" stroke="#111" stroke-width="1.8"/><path d="M8 9.5 V4.5 L12 9.5 V4.5" fill="none" stroke="#111" stroke-width="1"/></g><path d="M15 13 h7 l-2.4 2.8 v4 h-2.2 v-4 z" fill="#a838c4" stroke="#84289c" stroke-width=".5"/></svg>
<svg class="abs" style="left:635px;top:21px" width="26" height="24" viewBox="0 0 26 24"><g transform="translate(2 2)"><rect x="2" y="1" width="13" height="12" fill="#fff" stroke="#111" stroke-width="1"/><path d="M5 11 L8.5 2.5 L12 11 M6.2 8 H10.8" fill="none" stroke="#111" stroke-width="1.4"/><path d="M8.5 13 V15 M5.5 18 L8.5 14.5 L11.5 18 Z" fill="#111" stroke="#111" stroke-width="1"/></g><path d="M15 13 h7 l-2.4 2.8 v4 h-2.2 v-4 z" fill="#a838c4" stroke="#84289c" stroke-width=".5"/></svg>
<svg class="abs" style="left:662px;top:21px" width="26" height="24" viewBox="0 0 26 24"><g transform="translate(2 2)"><path d="M1 12 Q4 6 7 5 L10 9 L14 4 L17 3" fill="none" stroke="#111" stroke-width="1.6"/><path d="M8 9 L13 9 L14 4 Z" fill="#111"/></g><path d="M15 13 h7 l-2.4 2.8 v4 h-2.2 v-4 z" fill="#a838c4" stroke="#84289c" stroke-width=".5"/></svg>
<svg class="abs" style="left:689px;top:21px" width="26" height="24" viewBox="0 0 26 24"><g transform="translate(2 2)"><path d="M1 1 V7 H8 Z" fill="url(#rb)" stroke="#1d5f8c" stroke-width=".8"/><path d="M1 9 Q3 12 1 16 M4 9 Q6 12 4 16 M7 9 Q9 12 7 16 M10 9 Q12 12 10 16" fill="none" stroke="#111" stroke-width="1"/></g><path d="M15 13 h7 l-2.4 2.8 v4 h-2.2 v-4 z" fill="#a838c4" stroke="#84289c" stroke-width=".5"/></svg>
<svg class="abs" style="left:716px;top:21px" width="26" height="24" viewBox="0 0 26 24"><g transform="translate(2 2)"><circle cx="10" cy="7" r="5.2" fill="#fff" stroke="#111" stroke-width="1.2"/><path d="M6 11 L1 17" stroke="#111" stroke-width="1.8"/><path d="M4.8 7 H15.2" stroke="#111" stroke-width=".9"/><path d="M6.5 11 L8 7.5 L9.5 11 M10 8 H13 M11.5 8 V11" stroke="#111" stroke-width=".8" fill="none"/></g><path d="M15 13 h7 l-2.4 2.8 v4 h-2.2 v-4 z" fill="#a838c4" stroke="#84289c" stroke-width=".5"/></svg>
<svg class="abs" style="left:743px;top:21px" width="26" height="24" viewBox="0 0 26 24"><g transform="translate(2 2)"><path d="M3 1 H13 V10 L8 15 L3 10 Z" fill="#e8e8e8" stroke="#111" stroke-width="1" stroke-dasharray="1.6 1.1"/><path d="M5.5 2 V10 M10.5 2 V10" stroke="#aaa" stroke-width=".9"/></g><path d="M15 13 h7 l-2.4 2.8 v4 h-2.2 v-4 z" fill="#a838c4" stroke="#84289c" stroke-width=".5"/></svg>
<svg class="abs" style="left:770px;top:21px" width="26" height="24" viewBox="0 0 26 24"><g transform="translate(2 2)"><rect x="1" y="1" width="14" height="13" fill="#fff" stroke="#111" stroke-width="1"/><path d="M3.5 12 L7 3.5 L10.5 12 M4.8 9 H9.2" fill="none" stroke="#111" stroke-width="1.3"/><circle cx="12.3" cy="4.2" r="1.3" fill="none" stroke="#111" stroke-width=".8"/></g><path d="M15 13 h7 l-2.4 2.8 v4 h-2.2 v-4 z" fill="#a838c4" stroke="#84289c" stroke-width=".5"/></svg>
<svg class="abs" style="left:797px;top:21px" width="26" height="24" viewBox="0 0 26 24"><g transform="translate(2 2)"><circle cx="8" cy="8" r="6.6" fill="#fff" stroke="#555" stroke-width="1"/><path d="M8 8 V1.4 A6.6 6.6 0 0 0 1.4 8 Z M8 8 V14.6 A6.6 6.6 0 0 0 14.6 8 Z" fill="#111"/></g><path d="M15 13 h7 l-2.4 2.8 v4 h-2.2 v-4 z" fill="#a838c4" stroke="#84289c" stroke-width=".5"/></svg>
<svg class="abs" style="left:824px;top:21px" width="26" height="24" viewBox="0 0 26 24"><g transform="translate(2 2)"><path d="M0 5 H9" stroke="#111" stroke-width="1.6"/><rect x="9" y="1.5" width="7" height="7" fill="url(#rb)" stroke="#1d5f8c" stroke-width="1"/></g><path d="M15 13 h7 l-2.4 2.8 v4 h-2.2 v-4 z" fill="#a838c4" stroke="#84289c" stroke-width=".5"/></svg>
<svg class="abs" style="left:851px;top:21px" width="26" height="24" viewBox="0 0 26 24"><g transform="translate(2 2)"><path d="M0 5 H17" stroke="#111" stroke-width="1.6"/><rect x="4.5" y="1.5" width="7" height="7" fill="url(#rb)" stroke="#1d5f8c" stroke-width="1"/></g><path d="M15 13 h7 l-2.4 2.8 v4 h-2.2 v-4 z" fill="#a838c4" stroke="#84289c" stroke-width=".5"/></svg>
<svg class="abs" style="left:878px;top:21px" width="26" height="24" viewBox="0 0 26 24"><g transform="translate(2 2)"><rect x="1" y="1" width="13" height="13" fill="url(#rb)" stroke="#1d5f8c" stroke-width="1"/><path d="M8 7 l5 -5 l4 5.5 l-4.5 3.5 z m5 -5 l-.5 9 m-4.5 -4 l9 .5" fill="#fff" stroke="#333" stroke-width=".8"/></g><path d="M15 13 h7 l-2.4 2.8 v4 h-2.2 v-4 z" fill="#a838c4" stroke="#84289c" stroke-width=".5"/></svg>
<svg class="abs" style="left:908px;top:21px" width="26" height="24" viewBox="0 0 26 24"><g transform="translate(2 2)"><path d="M1.5 0 V17" stroke="#2e7fb3" stroke-width="1.8"/><path d="M6 7 l5 -5 l4 5.5 l-4.5 3.5 z m5 -5 l-.5 9 m-4.5 -4 l9 .5" fill="#fff" stroke="#333" stroke-width=".8"/></g><path d="M15 13 h7 l-2.4 2.8 v4 h-2.2 v-4 z" fill="#a838c4" stroke="#84289c" stroke-width=".5"/></svg>
<svg class="abs" style="left:933px;top:21px" width="26" height="24" viewBox="0 0 26 24"><g transform="translate(2 2)"><circle cx="3" cy="6" r="2.4" fill="url(#rb)" stroke="#1d5f8c" stroke-width=".8"/><path d="M8 7 l5 -5 l4 5.5 l-4.5 3.5 z m5 -5 l-.5 9 m-4.5 -4 l9 .5" fill="#fff" stroke="#333" stroke-width=".8"/></g><path d="M15 13 h7 l-2.4 2.8 v4 h-2.2 v-4 z" fill="#a838c4" stroke="#84289c" stroke-width=".5"/></svg>
<div class="abs" style="left:964px;top:19px;width:1px;height:28px;background:#b0b0b0"></div>
<div class="abs" style="left:0;top:47px;width:1919px;height:1px;background:#a8a8a8"></div>
<span class="abs" style="left:1px;top:51px;font-size:12.5px;line-height:16px;white-space:nowrap;letter-spacing:-.12px">SOLIDWORKS Premium 2025 SP3.0</span>
<span class="abs" style="left:1816px;top:51px;font-size:12px;line-height:16px;white-space:nowrap">自定义</span>
<i class="abs" style="left:1868px;top:56px;width:0;height:0;border-left:3.5px solid transparent;border-right:3.5px solid transparent;border-bottom:4px solid #222"></i>
<svg class="abs" style="left:1899px;top:50px" width="20" height="17" viewBox="0 0 20 17"><path d="M1 6 L8 1 L19 6 L17 12 L10 16.5 L1 11 Z" fill="#eee" stroke="#444" stroke-width="1"/><ellipse cx="9" cy="6" rx="3.4" ry="2" fill="#fff" stroke="#444" stroke-width="1"/><path d="M12 9 L16 7" stroke="#444" stroke-width="1.2"/></svg>
<div class="abs" style="left:1915px;top:1px;width:2px;height:15px;background:#8fb4c4"></div>
</div>
<svg class="abs" style="left:0;top:0;pointer-events:none" width="1919" height="1032" viewBox="0 0 1919 1032">
<defs><linearGradient id="cb" x1="0" y1="0" x2="1" y2="1"><stop offset="0" stop-color="#cfe6f3"/><stop offset="1" stop-color="#3f8ab8"/></linearGradient><radialGradient id="sph" cx=".35" cy=".3" r=".8"><stop offset="0" stop-color="#e8f6ff"/><stop offset=".5" stop-color="#6ab0d8"/><stop offset="1" stop-color="#235a80"/></radialGradient><clipPath id="bc"><circle cx="0" cy="0" r="8.5"/></clipPath></defs>
<rect x="629" y="116" width="1290" height="1" fill="#7d8f98"/>
<g transform="translate(759 131)" opacity="1"><circle cx="2" cy="-2" r="6.2" fill="#b9d6e6" fill-opacity=".75" stroke="#23506e" stroke-width="1.1"/><path d="M-2.5 2.8 L-8.5 9" stroke="#23506e" stroke-width="2.6" stroke-linecap="round"/><path d="M-2.5 2.8 L-8.5 9" stroke="#a9cbdd" stroke-width="1.1" stroke-linecap="round"/><path d="M2 -5.5 V1.5 M-1.5 -2 H5.5" stroke="#222" stroke-width="1"/></g>
<g transform="translate(785 131)" opacity="1"><path d="M0 -9 L3 -5.5 H1 V-1 H5.5 V-3 L9 0 L5.5 3 V1 H1 V5.5 H3 L0 9 L-3 5.5 H-1 V1 H-5.5 V3 L-9 0 L-5.5 -3 V-1 H-1 V-5.5 H-3 Z" fill="#9cc6dc" stroke="#23506e" stroke-width="1"/></g>
<g transform="translate(814 131)" opacity="1"><circle cx="2" cy="-2" r="6.2" fill="#b9d6e6" fill-opacity=".75" stroke="#23506e" stroke-width="1.1"/><path d="M-2.5 2.8 L-8.5 9" stroke="#23506e" stroke-width="2.6" stroke-linecap="round"/><path d="M-2.5 2.8 L-8.5 9" stroke="#a9cbdd" stroke-width="1.1" stroke-linecap="round"/><path d="M-9 -7 V5 M-11 -5 L-9 -8 L-7 -5 M-11 3 L-9 6 L-7 3" stroke="#222" stroke-width="1.2" fill="none"/></g>
<g transform="translate(839 131)" opacity="1"><circle cx="2" cy="-2" r="6.2" fill="#b9d6e6" fill-opacity=".75" stroke="#23506e" stroke-width="1.1"/><path d="M-2.5 2.8 L-8.5 9" stroke="#23506e" stroke-width="2.6" stroke-linecap="round"/><path d="M-2.5 2.8 L-8.5 9" stroke="#a9cbdd" stroke-width="1.1" stroke-linecap="round"/><rect x="-4" y="-9" width="13" height="13" fill="none" stroke="#333" stroke-width="1.2" stroke-dasharray="3 2"/></g>
<g transform="translate(863 131)" opacity="0.35"><circle cx="2" cy="-2" r="6.2" fill="#b9d6e6" fill-opacity=".75" stroke="#23506e" stroke-width="1.1"/><path d="M-2.5 2.8 L-8.5 9" stroke="#23506e" stroke-width="2.6" stroke-linecap="round"/><path d="M-2.5 2.8 L-8.5 9" stroke="#a9cbdd" stroke-width="1.1" stroke-linecap="round"/><path d="M0 -3 H4 M0 -1 H4" stroke="#5d93b0" stroke-width="1"/></g>
<g transform="translate(888 131)" opacity="1"><path d="M-9 2 L5 -8 L9 -3 L-5 7 Z" fill="#c9d3d8" stroke="#444" stroke-width="1"/><path d="M-9 2 L-5 7 L-7 9 L-11 4 Z" fill="#eee" stroke="#444" stroke-width=".8"/><path d="M9 4 H3 V1.5 L-2 5.5 L3 9.5 V7 H9 Z" fill="#2e7fb3" stroke="#1d5f8c" stroke-width=".6"/></g>
<g transform="translate(914 131)" opacity="1"><path d="M5 -6 A8 8 0 1 0 8 3" fill="none" stroke="#23506e" stroke-width="2.6"/><path d="M5 -6 A8 8 0 1 0 8 3" fill="none" stroke="#8dbcd6" stroke-width="1"/><path d="M3 -9.5 H9.5 V-3" fill="none" stroke="#23506e" stroke-width="1.4"/></g>
<g transform="translate(940 131)" opacity="1"><path d="M-9 6 L-2 3 L9 5 L1 9 Z" fill="#8dbcd6" stroke="#23506e" stroke-width=".9"/><path d="M0 5 V-8 M-2.8 -5 L0 -9 L2.8 -5" stroke="#222" stroke-width="1.6" fill="none"/></g>
<g transform="translate(966 131)" opacity="1"><path d="M-8 -3 Q-8 -8 0 -8 Q8 -8 8 -3 V7 H4 V-2 Q0 -4 -4 -2 V7 H-8 Z" fill="#7fb2cf" stroke="#23506e" stroke-width="1"/><path d="M-8 -1 L-4 -3 M-8 2 L-4 0 M-8 5 L-4 3 M4 -1 L8 -3 M4 2 L8 0 M4 5 L8 3" stroke="#23506e" stroke-width=".9"/></g>
<g transform="translate(992 131)" opacity="1"><path d="M-8 -4 L-3 -8 H9 V4 L4 8.5 H-8 Z" fill="url(#cb)" stroke="#23506e" stroke-width="1" stroke-linejoin="round"/><path d="M-8 -4 H4 V8.5 M4 -4 L9 -8" fill="none" stroke="#23506e" stroke-width="1"/><path d="M1 -7 V-5 M6.5 -1 H8" stroke="#111" stroke-width="1.3"/></g>
<g transform="translate(1032 131)" opacity="1"><path d="M-8 -4 L-3 -8 H9 V4 L4 8.5 H-8 Z" fill="url(#cb)" stroke="#23506e" stroke-width="1" stroke-linejoin="round"/><path d="M-8 -4 H4 V8.5 M4 -4 L9 -8" fill="none" stroke="#23506e" stroke-width="1"/><path d="M-2 -4 H4 V8.5 H-2 Z" fill="#eaf4fa"/></g>
<g transform="translate(1072 131)" opacity="1"><path d="M-8 -4 L-3 -8 H9 V4 L4 8.5 H-8 Z" fill="none" stroke="#4d7d98" stroke-width="1" stroke-linejoin="round"/><path d="M-8 -4 H4 V8.5 M4 -4 L9 -8" fill="none" stroke="#4d7d98" stroke-width="1"/><path d="M-8 8.5 L-3 4 H9 M-3 4 V-8" stroke="#4d7d98" stroke-width=".8" fill="none" stroke-dasharray="2 1.5"/><path d="M-1 1 L1 -1 L3 1" stroke="#1d6fa8" stroke-width="1.3" fill="none"/></g>
<g transform="translate(1098 131)" opacity="1"><path d="M-8 -4 L-3 -8 H9 V4 L4 8.5 H-8 Z" fill="#a8cde0" stroke="#4d7d98" stroke-width="1" stroke-linejoin="round"/><path d="M-8 -4 H4 V8.5 M4 -4 L9 -8" fill="none" stroke="#4d7d98" stroke-width="1"/></g>
<g transform="translate(1124 131)" opacity="1"><path d="M-8 -4 L-3 -8 H9 V4 L4 8.5 H-8 Z" fill="url(#cb)" stroke="none" stroke-width="0" stroke-linejoin="round"/><path d="M-8 -4 H4 V8.5 M4 -4 L9 -8" fill="none" stroke="none" stroke-width="0"/></g>
<rect x="1137.5" y="118.5" width="26" height="26" fill="#4a7c98" stroke="#3b6479" stroke-width="1"/>
<g transform="translate(1150 131)" opacity="1"><path d="M-8 -4 L-3 -8 H9 V4 L4 8.5 H-8 Z" fill="url(#cb)" stroke="#0d2c40" stroke-width="1.5" stroke-linejoin="round"/><path d="M-8 -4 H4 V8.5 M4 -4 L9 -8" fill="none" stroke="#0d2c40" stroke-width="1.5"/></g>
<g transform="translate(1177 131)" opacity="1"><path d="M-9 0 Q0 -9 9 0 Q0 8 -9 0 Z" fill="#dfe9ee" stroke="#555" stroke-width="1"/><circle cx="0" cy="0" r="3.6" fill="#333"/><path d="M0 -9 V9" stroke="#555" stroke-width=".8"/></g>
<g transform="translate(1213 130)" opacity="1"><g clip-path="url(#bc)"><rect x="-9" y="-9" width="9" height="9" fill="#2a6fd0"/><rect x="0" y="-9" width="9" height="9" fill="#d8261c"/><rect x="-9" y="0" width="9" height="9" fill="#2fa82f"/><rect x="0" y="0" width="9" height="9" fill="#f2c21a"/><ellipse cx="-3" cy="-4" rx="4" ry="2.4" fill="#fff" opacity=".45"/></g><path d="M3 9 L5 3 L10 -2 L13 1 L8 6 Z" fill="#f2c21a" stroke="#333" stroke-width=".9"/><path d="M3 9 L5 3 L8 6 Z" fill="#fbe9c0" stroke="#333" stroke-width=".7"/></g>
<g transform="translate(1241 130)" opacity="1"><g clip-path="url(#bc)"><rect x="-9" y="-9" width="9" height="9" fill="#2a6fd0"/><rect x="0" y="-9" width="9" height="9" fill="#d8261c"/><rect x="-9" y="0" width="9" height="9" fill="#2fa82f"/><rect x="0" y="0" width="9" height="9" fill="#f2c21a"/><ellipse cx="-3" cy="-4" rx="4" ry="2.4" fill="#fff" opacity=".45"/></g><rect x="-10" y="3" width="20" height="6.5" fill="#fff" stroke="#222" stroke-width=".6"/><path d="M-10 3 h4 v3.2 h-4 z M-2 3 h4 v3.2 h-4 z M6 3 h4 v3.2 h-4 z M-6 6.2 h4 v3.3 h-4 z M2 6.2 h4 v3.3 h-4 z" fill="#111"/></g>
<g transform="translate(1282 131)" opacity="1"><rect x="-9" y="-8" width="18" height="12" fill="#dbe4e8" stroke="#444" stroke-width="1.1"/><path d="M0 4 V7 M-4.5 7.6 H4.5" stroke="#222" stroke-width="1.6"/></g>
<g transform="translate(1321 131)" opacity="1"><circle cx="0" cy="-1" r="7.5" fill="url(#sph)" stroke="#2a5f82" stroke-width=".6"/><ellipse cx="0" cy="8" rx="6" ry="1.3" fill="#3f6f8a" opacity=".5"/></g>
<g transform="translate(1347 131)" opacity="1"><path d="M-8 -4 L-3 -8 H9 V4 L4 8.5 H-8 Z" fill="#b5c0c6" stroke="#4a4a4a" stroke-width="1" stroke-linejoin="round"/><path d="M-8 -4 H4 V8.5 M4 -4 L9 -8" fill="none" stroke="#4a4a4a" stroke-width="1"/></g>
<g transform="translate(1374 131)" opacity="1"><circle cx="0" cy="0" r="8" fill="#c4ccd0" stroke="#555" stroke-width="1"/><circle cx="1" cy="1" r="4.2" fill="#555"/><circle cx="1" cy="1" r="2" fill="#999"/></g>
<rect x="1387.5" y="118.5" width="26" height="26" fill="#4a7c98" stroke="#3b6479" stroke-width="1"/>
<g transform="translate(1400 131)" opacity="1"><path d="M-8 -4 L-3 -8 H9 V4 L4 8.5 H-8 Z" fill="#c9cdd0" stroke="#3a3a3a" stroke-width="1.2" stroke-linejoin="round"/><path d="M-8 -4 H4 V8.5 M4 -4 L9 -8" fill="none" stroke="#3a3a3a" stroke-width="1.2"/><path d="M2 -10 L10 -10 L5 -4 L9 -4 L-2 5 L2 -2 L-2 -2 Z" fill="#f6b21a" stroke="#c8401a" stroke-width=".8"/></g>
<path d="M1008 132 h6 l-3 3.5 z" fill="#5b8da8"/>
<path d="M1048 132 h6 l-3 3.5 z" fill="#5b8da8"/>
<path d="M1192 132 h6 l-3 3.5 z" fill="#5b8da8"/>
<path d="M1258 132 h6 l-3 3.5 z" fill="#5b8da8"/>
<path d="M1298 132 h6 l-3 3.5 z" fill="#5b8da8"/>
<g fill="none" stroke="#5b8ba8" stroke-width="1.2"><rect x="1789.5" y="125.5" width="11" height="12"/><path d="M1797 129 L1793 131.5 L1797 134 Z" fill="#5b8ba8"/><rect x="1816.5" y="125.5" width="11" height="12"/><path d="M1820 129 L1824 131.5 L1820 134 Z" fill="#5b8ba8"/><path d="M1843 137 H1853"/><rect x="1868.5" y="129.5" width="9" height="8"/><path d="M1871 129 V126.5 H1881 V134.5 H1878"/><path d="M1895 126.5 L1905 136.5 M1905 126.5 L1895 136.5"/></g>
<rect x="1895.5" y="167.5" width="24" height="169" fill="#d6d6d6" stroke="#8a8a8a"/>
<rect x="1896" y="168" width="23" height="24" fill="#f4f4f4"/>
<path d="M1895.5 192.0 H1919" stroke="#9a9a9a" stroke-width="1"/>
<path d="M1895.5 216.0 H1919" stroke="#9a9a9a" stroke-width="1"/>
<path d="M1895.5 240.0 H1919" stroke="#9a9a9a" stroke-width="1"/>
<path d="M1895.5 264.0 H1919" stroke="#9a9a9a" stroke-width="1"/>
<path d="M1895.5 288.0 H1919" stroke="#9a9a9a" stroke-width="1"/>
<path d="M1895.5 312.0 H1919" stroke="#9a9a9a" stroke-width="1"/>
<g transform="translate(1907.5 180)"><path d="M-9 0 L0 -8.5 L9 0" fill="none" stroke="#1d5f8c" stroke-width="2.2"/><path d="M-6 0 V8 H6 V0 L0 -5 Z" fill="#fff" stroke="#222" stroke-width="1.1"/><rect x="-1.5" y="2" width="3.6" height="6" fill="#fff" stroke="#222" stroke-width="1"/></g>
<g transform="translate(1907.5 204)"><path d="M-7 -4 L-3 -7 V7 L-7 9 Z M-3 -7 L1 -8 V7 L-3 7 Z M1 -8 L5 -7 V6 L1 7 Z M5 -7 L7.5 -5 V4.5 L5 6 Z" fill="#f4f4f4" stroke="#333" stroke-width="1"/></g>
<g transform="translate(1907.5 228)"><path d="M-9 8 V-7 H-3 L-1.5 -5 H6 V-2" fill="#eee" stroke="#444" stroke-width="1.1"/><path d="M-9 8 L-5 -2 H10 L6 8 Z" fill="#fafafa" stroke="#444" stroke-width="1.1"/></g>
<g transform="translate(1907.5 252)"><rect x="-8.5" y="-8" width="17" height="16" rx="1.5" fill="#fff" stroke="#333" stroke-width="1.1"/><path d="M-5.5 -5 H2 V-2 H-.5 V2 H3 V5.5 H-6 V2 H-3 V-2 H-5.5 Z" fill="#f2c21a" stroke="#8a6a08" stroke-width=".7"/><rect x="4" y="-5" width="2.6" height="2.6" fill="#f2c21a" stroke="#8a6a08" stroke-width=".6"/><rect x="4.5" y="0" width="2.4" height="6" fill="#ccc" stroke="#555" stroke-width=".6"/></g>
<g transform="translate(1907.5 276)"><g clip-path="url(#bc)"><rect x="-9" y="-9" width="9" height="9" fill="#2a6fd0"/><rect x="0" y="-9" width="9" height="9" fill="#d8261c"/><rect x="-9" y="0" width="9" height="9" fill="#2fa82f"/><rect x="0" y="0" width="9" height="9" fill="#f2c21a"/><ellipse cx="-3" cy="-4" rx="4" ry="2.4" fill="#fff" opacity=".45"/></g></g>
<g transform="translate(1907.5 300)"><rect x="-8.5" y="-8.5" width="17" height="17" fill="#fff" stroke="#1d3f5c" stroke-width="1.2"/><rect x="-8.5" y="-8.5" width="17" height="3.4" fill="#5aa7d4"/><rect x="-6" y="-3" width="3.6" height="2" fill="#5aa7d4" stroke="#1d5f8c" stroke-width=".5"/><rect x="-6" y=".6" width="3.6" height="2" fill="#5aa7d4" stroke="#1d5f8c" stroke-width=".5"/><rect x="-6" y="4.200" width="3.6" height="2" fill="#5aa7d4" stroke="#1d5f8c" stroke-width=".5"/><path d="M-1 -2 H6.500 M-1 1.600 H6.500 M-1 5.200 H6.5" stroke="#222" stroke-width="1"/></g>
<g transform="translate(1907.5 324)"><path d="M-9 -8 H3 V0 H-3 L-6 3 V0 H-9 Z" fill="#3b8fc2" stroke="#1d4f74" stroke-width="1"/><path d="M-1 -3 H9 V5 H6 V8 L3 5 H-1 Z" fill="#f0f0f0" stroke="#444" stroke-width="1"/></g>
<g><path d="M283.5 906.500 H260" stroke="#e00000" stroke-width="3"/><path d="M253 906.500 L262.500 902.500 V911 Z" fill="#d00000"/><path d="M283.500 907.500 V897" stroke="#b9b9f4" stroke-width="3.400"/><path d="M283.500 908 V903" stroke="#0808c8" stroke-width="3.400"/><path d="M279.600 893 L283.700 888 L288 893 L286 897.500 H281.500 Z" fill="#0808c8"/><path d="M281.600 899 V889 L283 884.5" stroke="#109010" stroke-width="1.200" fill="none"/><text x="245" y="906" font-family="'Liberation Sans',sans-serif" font-size="9" fill="#e00000">x</text><text x="280.5" y="878" font-family="'Liberation Sans',sans-serif" font-size="7" fill="#109010">Y</text><text x="282" y="884" font-family="'Liberation Sans',sans-serif" font-size="7" fill="#2020e0">Z</text></g>
<rect x="242" y="139" width="1.3" height="826" fill="#5a5a5a"/>
<g font-family="'DejaVu Sans','Liberation Sans',sans-serif" font-weight="200" fill="#101010" stroke="#101010" stroke-width=".3" transform="rotate(-1.2 1590 890)"><text transform="translate(1319 872) skewX(-16)" font-size="28" textLength="352" lengthAdjust="spacing" rotate="2 4 -9 -6 -9 -2 -6 4 -2 4 -6 -9 4 -2 -4 4 -6" dy="-1 3 -4 2 1 -3 2 -2 0 0 1 2 -3 0 2 -1 2">SENSNOW  SOFTWARE</text><text transform="translate(1316 914) skewX(-16)" font-size="28" textLength="542" lengthAdjust="spacing" rotate="0 -4 -2 -6 -6 -9 -2 4 7 7 0 -4 -2 0 7 7 -6 4 2 7 -9 -6 2 2 7 7 -6 7 -6" dy="1 -3 2 1 0 0 -1 0 1 -1 -1 3 -4 3 -1 0 -2 1 0 1 2 -1 -1 1 0 -3 2 2 -4">PRINCIPAL INVESTIGATOR / JOE.</text></g>
<g font-family="'Liberation Sans','Noto Sans CJK SC',sans-serif" fill="#9a9a9a" fill-opacity=".05" stroke="#707070" stroke-opacity=".13" stroke-width=".8" text-anchor="middle">
<g transform="translate(120 165) rotate(-30)"><text x="-4" y="-4" font-size="35" textLength="146" lengthAdjust="spacingAndGlyphs">Sensnow</text><text x="8" y="27" font-size="26" textLength="142" lengthAdjust="spacing">新思诺软件</text></g>
<g transform="translate(795 175) rotate(-30)"><text x="-4" y="-4" font-size="35" textLength="146" lengthAdjust="spacingAndGlyphs">Sensnow</text><text x="8" y="27" font-size="26" textLength="142" lengthAdjust="spacing">新思诺软件</text></g>
<g transform="translate(1375 170) rotate(-30)"><text x="-4" y="-4" font-size="35" textLength="146" lengthAdjust="spacingAndGlyphs">Sensnow</text><text x="8" y="27" font-size="26" textLength="142" lengthAdjust="spacing">新思诺软件</text></g>
<g transform="translate(405 350) rotate(-30)"><text x="-4" y="-4" font-size="35" textLength="146" lengthAdjust="spacingAndGlyphs">Sensnow</text><text x="8" y="27" font-size="26" textLength="142" lengthAdjust="spacing">新思诺软件</text></g>
<g transform="translate(1075 350) rotate(-30)"><text x="-4" y="-4" font-size="35" textLength="146" lengthAdjust="spacingAndGlyphs">Sensnow</text><text x="8" y="27" font-size="26" textLength="142" lengthAdjust="spacing">新思诺软件</text></g>
<g transform="translate(1650 355) rotate(-30)"><text x="-4" y="-4" font-size="35" textLength="146" lengthAdjust="spacingAndGlyphs">Sensnow</text><text x="8" y="27" font-size="26" textLength="142" lengthAdjust="spacing">新思诺软件</text></g>
<g transform="translate(78 552) rotate(-30)"><text x="-4" y="-4" font-size="35" textLength="146" lengthAdjust="spacingAndGlyphs">Sensnow</text><text x="8" y="27" font-size="26" textLength="142" lengthAdjust="spacing">新思诺软件</text></g>
<g transform="translate(745 560) rotate(-30)"><text x="-4" y="-4" font-size="35" textLength="146" lengthAdjust="spacingAndGlyphs">Sensnow</text><text x="8" y="27" font-size="26" textLength="142" lengthAdjust="spacing">新思诺软件</text></g>
<g transform="translate(1315 561) rotate(-30)"><text x="-4" y="-4" font-size="35" textLength="146" lengthAdjust="spacingAndGlyphs">Sensnow</text><text x="8" y="27" font-size="26" textLength="142" lengthAdjust="spacing">新思诺软件</text></g>
<g transform="translate(395 690) rotate(-30)"><text x="-4" y="-4" font-size="35" textLength="146" lengthAdjust="spacingAndGlyphs">Sensnow</text><text x="8" y="27" font-size="26" textLength="142" lengthAdjust="spacing">新思诺软件</text></g>
<g transform="translate(1080 666) rotate(-30)"><text x="-4" y="-4" font-size="35" textLength="146" lengthAdjust="spacingAndGlyphs">Sensnow</text><text x="8" y="27" font-size="26" textLength="142" lengthAdjust="spacing">新思诺软件</text></g>
<g transform="translate(1630 696) rotate(-30)"><text x="-4" y="-4" font-size="35" textLength="146" lengthAdjust="spacingAndGlyphs">Sensnow</text><text x="8" y="27" font-size="26" textLength="142" lengthAdjust="spacing">新思诺软件</text></g>
<g transform="translate(60 905) rotate(-30)"><text x="-4" y="-4" font-size="35" textLength="146" lengthAdjust="spacingAndGlyphs">Sensnow</text><text x="8" y="27" font-size="26" textLength="142" lengthAdjust="spacing">新思诺软件</text></g>
<g transform="translate(720 905) rotate(-30)"><text x="-4" y="-4" font-size="35" textLength="146" lengthAdjust="spacingAndGlyphs">Sensnow</text><text x="8" y="27" font-size="26" textLength="142" lengthAdjust="spacing">新思诺软件</text></g>
<g transform="translate(1300 911) rotate(-30)"><text x="-4" y="-4" font-size="35" textLength="146" lengthAdjust="spacingAndGlyphs">Sensnow</text><text x="8" y="27" font-size="26" textLength="142" lengthAdjust="spacing">新思诺软件</text></g>
<g transform="translate(1890 826) rotate(-30)"><text x="-4" y="-4" font-size="35" textLength="146" lengthAdjust="spacingAndGlyphs">Sensnow</text><text x="8" y="27" font-size="26" textLength="142" lengthAdjust="spacing">新思诺软件</text></g>
<g transform="translate(330 1003) rotate(-30)"><text x="-4" y="-4" font-size="35" textLength="146" lengthAdjust="spacingAndGlyphs">Sensnow</text><text x="8" y="27" font-size="26" textLength="142" lengthAdjust="spacing">新思诺软件</text></g>
<g transform="translate(1010 996) rotate(-30)"><text x="-4" y="-4" font-size="35" textLength="146" lengthAdjust="spacingAndGlyphs">Sensnow</text><text x="8" y="27" font-size="26" textLength="142" lengthAdjust="spacing">新思诺软件</text></g>
<g transform="translate(1575 1006) rotate(-30)"><text x="-4" y="-4" font-size="35" textLength="146" lengthAdjust="spacingAndGlyphs">Sensnow</text><text x="8" y="27" font-size="26" textLength="142" lengthAdjust="spacing">新思诺软件</text></g>
<g transform="translate(1105 -12) rotate(-30)"><text x="-4" y="-4" font-size="35" textLength="146" lengthAdjust="spacingAndGlyphs">Sensnow</text><text x="8" y="27" font-size="26" textLength="142" lengthAdjust="spacing">新思诺软件</text></g>
<g transform="translate(1680 -8) rotate(-30)"><text x="-4" y="-4" font-size="35" textLength="146" lengthAdjust="spacingAndGlyphs">Sensnow</text><text x="8" y="27" font-size="26" textLength="142" lengthAdjust="spacing">新思诺软件</text></g>
</g>
</svg>
</body>
</html>
